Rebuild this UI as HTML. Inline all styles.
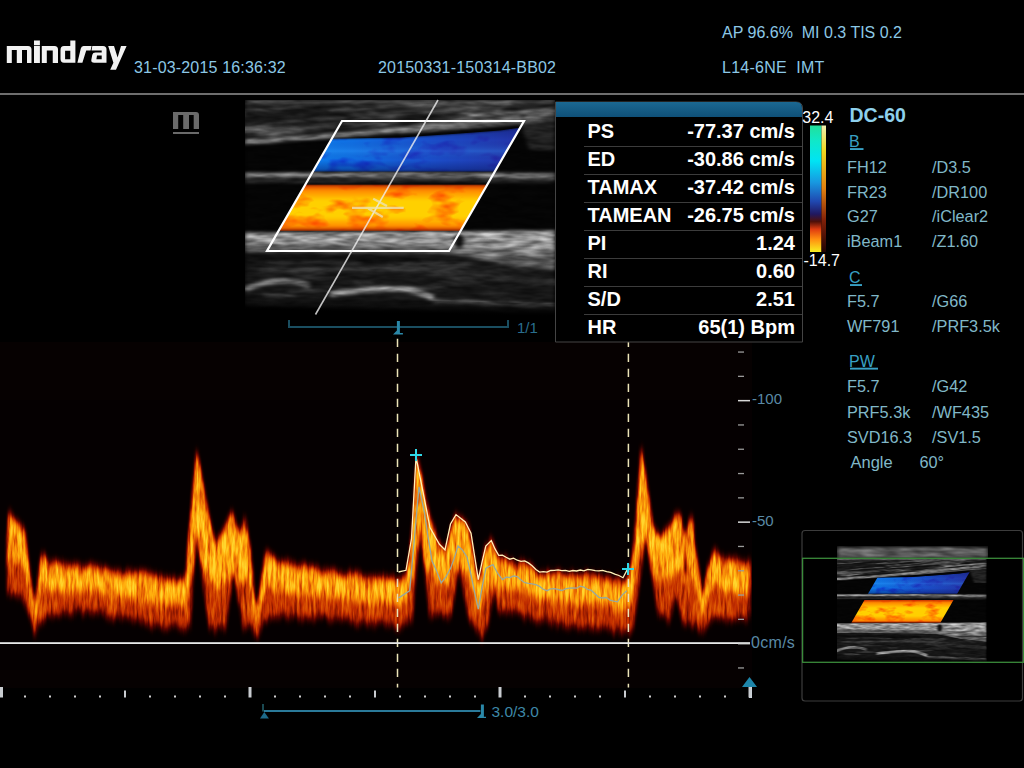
<!DOCTYPE html><html><head><meta charset="utf-8"><style>html,body{margin:0;padding:0;background:#000;width:1024px;height:768px;overflow:hidden}svg{display:block}text{font-family:"Liberation Sans",sans-serif}</style></head><body>
<svg width="1024" height="768" viewBox="0 0 1024 768">
<defs>
<filter id="hot" x="0" y="0" width="1" height="1" color-interpolation-filters="sRGB">
 <feGaussianBlur in="SourceGraphic" stdDeviation="1.8 4.5" result="b"/>
 <feTurbulence type="fractalNoise" baseFrequency="0.38 0.045" numOctaves="3" seed="5" result="n"/>
 <feColorMatrix in="n" type="matrix" values="1.5 0 0 0 -0.2  1.5 0 0 0 -0.2  1.5 0 0 0 -0.2  0 0 0 0 1" result="ng"/>
 <feComposite in="b" in2="ng" operator="arithmetic" k1="0.6" k2="0.45" k3="0" k4="0" result="m"/>
 <feComponentTransfer in="m">
  <feFuncR type="table" tableValues="0.02 0.38 0.76 0.93 1 1"/>
  <feFuncG type="table" tableValues="0 0.02 0.18 0.44 0.68 0.84"/>
  <feFuncB type="table" tableValues="0.004 0 0 0.02 0.05 0.18"/>
  <feFuncA type="linear" slope="0" intercept="1"/>
 </feComponentTransfer>
</filter>
<filter id="speck" x="0" y="0" width="1" height="1" color-interpolation-filters="sRGB">
 <feGaussianBlur in="SourceGraphic" stdDeviation="2 1.5" result="b"/>
 <feTurbulence type="fractalNoise" baseFrequency="0.05 0.22" numOctaves="2" seed="7" result="n"/>
 <feColorMatrix in="n" type="matrix" values="1.5 0 0 0 -0.25  1.5 0 0 0 -0.25  1.5 0 0 0 -0.25  0 0 0 0 1" result="ng"/>
 <feComposite in="b" in2="ng" operator="arithmetic" k1="0.7" k2="0.5" k3="0" k4="0"/>
</filter>
<filter id="flowtex" color-interpolation-filters="sRGB">
 <feGaussianBlur in="SourceGraphic" stdDeviation="1" result="b"/>
 <feTurbulence type="fractalNoise" baseFrequency="0.035 0.07" numOctaves="3" seed="11" result="n"/>
 <feColorMatrix in="n" type="matrix" values="0.2 0 0 0 0.95  1.6 0 0 0 0.2  0.3 0 0 0 0.85  0 0 0 0 1" result="ng"/>
 <feComposite in="b" in2="ng" operator="arithmetic" k1="1" k2="0" k3="0" k4="0" result="c"/>
 <feComposite in="c" in2="SourceGraphic" operator="in"/>
</filter>
<linearGradient id="blueV" x1="0" y1="0" x2="0" y2="1"><stop offset="0" stop-color="#081860" stop-opacity="0.45"/><stop offset="0.32" stop-color="#081860" stop-opacity="0"/><stop offset="0.55" stop-color="#40b0ff" stop-opacity="0.22"/><stop offset="0.75" stop-color="#081860" stop-opacity="0"/><stop offset="1" stop-color="#081860" stop-opacity="0.5"/></linearGradient><clipPath id="bmclip"><rect x="245" y="100" width="310" height="220"/></clipPath><clipPath id="para"><polygon points="342,121 524,121 449,251 267,251"/></clipPath>
<linearGradient id="fadeB" x1="0" y1="0" x2="0" y2="1"><stop offset="0" stop-color="#000" stop-opacity="0"/><stop offset="0.9" stop-color="#000" stop-opacity="1"/></linearGradient>
<linearGradient id="blueG" gradientUnits="userSpaceOnUse" x1="280" y1="0" x2="520" y2="0"><stop offset="0" stop-color="#0c86f4"/><stop offset="0.3" stop-color="#1070e4"/><stop offset="0.6" stop-color="#1a50cc"/><stop offset="1" stop-color="#2434a8"/></linearGradient>
<linearGradient id="orangeG" x1="0" y1="0" x2="0" y2="1"><stop offset="0" stop-color="#c83000"/><stop offset="0.12" stop-color="#ff8800"/><stop offset="0.35" stop-color="#ffd000"/><stop offset="0.7" stop-color="#ffd000"/><stop offset="0.9" stop-color="#ff8c00"/><stop offset="1" stop-color="#b02000"/></linearGradient>
</defs>
<g fill="#f2f2f2" fill-rule="evenodd"><path d="M6.8,62.9 V46 H28 Q31.5,46 31.5,49.5 V62.9 H27 V50 H22 V62.9 H16.8 V50 H11.8 V62.9 Z"/><path d="M34,46 H39.9 V62.9 H34 Z M34,40.4 H39.9 V45.2 H34 Z"/><path d="M41.8,62.9 V46 H54.5 Q58,46 58,49.5 V62.9 H52.75 V50.4 H46.8 V62.9 Z"/><path d="M75.4,40.4 V62.7 H64 Q60.5,62.7 60.5,59 V50 Q60.5,46 64,46 H70.3 V40.4 Z M65.1,50.7 H70.3 V59.2 H65.1 Z"/><path d="M77.4,62.7 H82.4 L86.2,50.5 H90.6 L91.6,46 H83.5 Q81.3,46 80.8,48.5 Z"/><path d="M92.3,46 H103 Q106.5,46 106.5,49.5 V62.7 H94.2 Q91,62.7 91.3,60 L92.3,54.8 Q92.8,52.4 95.5,52.4 H101.7 V50.6 H91.5 Z M97,55.5 H101.7 V59.3 H96.4 Z"/><path d="M108.2,46 H114 L117.6,57.5 L121,46 H126.6 L116,69.8 H110.2 L113.4,62.7 Z"/></g>
<text x="134" y="72.5" font-size="16" fill="#8cc8e6" font-weight="normal" text-anchor="start" letter-spacing="0.17">31-03-2015 16:36:32</text>
<text x="378" y="72.5" font-size="16" fill="#8cc8e6" font-weight="normal" text-anchor="start" letter-spacing="0.19">20150331-150314-BB02</text>
<text x="722" y="38" font-size="16" fill="#8cc8e6" font-weight="normal" text-anchor="start" >AP 96.6%&#160;&#160;MI 0.3 TIS 0.2</text>
<text x="722" y="72.5" font-size="16" fill="#8cc8e6" font-weight="normal" text-anchor="start" letter-spacing="0.25">L14-6NE&#160;&#160;IMT</text>
<rect x="0" y="93" width="1024" height="2" fill="#6e6e6e"/>
<path d="M173,129 V112 H196 Q199,112 199,115 V129 H193.7 V115 H189 V129 H183.2 V115 H178.2 V129 Z" fill="#6a6a6a"/>
<rect x="173" y="132" width="26" height="2" fill="#6a6a6a"/>
<rect x="0" y="342" width="752" height="346" fill="#060101"/>
<g id="bm"><g clip-path="url(#bmclip)"><g filter="url(#speck)">
<rect x="245" y="100" width="310" height="220" fill="#000"/>
<polygon points="245,100 555,100 555,122 245,146" fill="#2a2a2a"/>
<rect x="245" y="100" width="310" height="3" fill="#606060"/>
<ellipse cx="443" cy="105" rx="20" ry="1.4" fill="#515151" transform="rotate(-4 443 105)"/>
<ellipse cx="277" cy="129" rx="15" ry="1.8" fill="#626262" transform="rotate(-4 277 129)"/>
<ellipse cx="254" cy="112" rx="32" ry="2.0" fill="#606060" transform="rotate(-4 254 112)"/>
<ellipse cx="467" cy="118" rx="19" ry="2.0" fill="#5a5a5a" transform="rotate(-4 467 118)"/>
<ellipse cx="496" cy="104" rx="17" ry="1.8" fill="#737373" transform="rotate(-4 496 104)"/>
<ellipse cx="331" cy="110" rx="23" ry="1.3" fill="#707070" transform="rotate(-4 331 110)"/>
<ellipse cx="275" cy="133" rx="21" ry="1.3" fill="#666666" transform="rotate(-4 275 133)"/>
<ellipse cx="387" cy="107" rx="15" ry="1.6" fill="#585858" transform="rotate(-4 387 107)"/>
<ellipse cx="440" cy="123" rx="31" ry="2.2" fill="#575757" transform="rotate(-4 440 123)"/>
<ellipse cx="259" cy="112" rx="45" ry="2.4" fill="#525252" transform="rotate(-4 259 112)"/>
<ellipse cx="514" cy="110" rx="33" ry="1.7" fill="#5d5d5d" transform="rotate(-4 514 110)"/>
<ellipse cx="360" cy="110" rx="35" ry="2.2" fill="#515151" transform="rotate(-4 360 110)"/>
<ellipse cx="267" cy="126" rx="36" ry="1.4" fill="#626262" transform="rotate(-4 267 126)"/>
<ellipse cx="363" cy="131" rx="35" ry="1.5" fill="#686868" transform="rotate(-4 363 131)"/>
<ellipse cx="346" cy="126" rx="20" ry="1.2" fill="#434343" transform="rotate(-4 346 126)"/>
<ellipse cx="343" cy="112" rx="42" ry="2.0" fill="#4d4d4d" transform="rotate(-4 343 112)"/>
<ellipse cx="468" cy="108" rx="25" ry="2.5" fill="#5f5f5f" transform="rotate(-4 468 108)"/>
<ellipse cx="387" cy="111" rx="37" ry="2.0" fill="#4f4f4f" transform="rotate(-4 387 111)"/>
<ellipse cx="477" cy="112" rx="25" ry="1.5" fill="#656565" transform="rotate(-4 477 112)"/>
<ellipse cx="554" cy="111" rx="37" ry="2.4" fill="#454545" transform="rotate(-4 554 111)"/>
<ellipse cx="292" cy="109" rx="26" ry="1.3" fill="#6b6b6b" transform="rotate(-4 292 109)"/>
<ellipse cx="363" cy="131" rx="20" ry="2.0" fill="#616161" transform="rotate(-4 363 131)"/>
<ellipse cx="537" cy="114" rx="34" ry="2.0" fill="#474747" transform="rotate(-4 537 114)"/>
<ellipse cx="328" cy="123" rx="22" ry="1.4" fill="#474747" transform="rotate(-4 328 123)"/>
<ellipse cx="246" cy="130" rx="21" ry="1.9" fill="#6e6e6e" transform="rotate(-4 246 130)"/>
<ellipse cx="300" cy="133" rx="33" ry="2.4" fill="#777777" transform="rotate(-4 300 133)"/>
<ellipse cx="402" cy="109" rx="37" ry="2.0" fill="#575757" transform="rotate(-4 402 109)"/>
<ellipse cx="486" cy="113" rx="32" ry="1.9" fill="#404040" transform="rotate(-4 486 113)"/>
<ellipse cx="280" cy="116" rx="39" ry="1.5" fill="#757575" transform="rotate(-4 280 116)"/>
<ellipse cx="320" cy="121" rx="15" ry="1.9" fill="#454545" transform="rotate(-4 320 121)"/>
<ellipse cx="266" cy="130" rx="16" ry="2.1" fill="#717171" transform="rotate(-4 266 130)"/>
<ellipse cx="539" cy="106" rx="41" ry="1.8" fill="#616161" transform="rotate(-4 539 106)"/>
<ellipse cx="311" cy="121" rx="35" ry="2.2" fill="#6e6e6e" transform="rotate(-4 311 121)"/>
<ellipse cx="369" cy="122" rx="26" ry="1.9" fill="#575757" transform="rotate(-4 369 122)"/>
<ellipse cx="283" cy="111" rx="13" ry="2.0" fill="#555555" transform="rotate(-4 283 111)"/>
<ellipse cx="427" cy="104" rx="33" ry="1.5" fill="#6d6d6d" transform="rotate(-4 427 104)"/>
<ellipse cx="526" cy="117" rx="29" ry="1.6" fill="#444444" transform="rotate(-4 526 117)"/>
<ellipse cx="395" cy="117" rx="43" ry="2.0" fill="#6e6e6e" transform="rotate(-4 395 117)"/>
<ellipse cx="392" cy="124" rx="25" ry="1.3" fill="#737373" transform="rotate(-4 392 124)"/>
<ellipse cx="449" cy="111" rx="27" ry="2.2" fill="#5a5a5a" transform="rotate(-4 449 111)"/>
<ellipse cx="454" cy="124" rx="14" ry="2.2" fill="#464646" transform="rotate(-4 454 124)"/>
<ellipse cx="493" cy="106" rx="18" ry="1.8" fill="#4c4c4c" transform="rotate(-4 493 106)"/>
<ellipse cx="376" cy="111" rx="41" ry="1.3" fill="#4f4f4f" transform="rotate(-4 376 111)"/>
<ellipse cx="495" cy="119" rx="14" ry="2.6" fill="#464646" transform="rotate(-4 495 119)"/>
<ellipse cx="504" cy="120" rx="40" ry="1.4" fill="#707070" transform="rotate(-4 504 120)"/>
<ellipse cx="396" cy="109" rx="25" ry="2" fill="#181818" transform="rotate(-4 396 109)"/>
<ellipse cx="263" cy="117" rx="40" ry="2" fill="#181818" transform="rotate(-4 263 117)"/>
<ellipse cx="327" cy="128" rx="26" ry="2" fill="#181818" transform="rotate(-4 327 128)"/>
<ellipse cx="376" cy="130" rx="40" ry="2" fill="#181818" transform="rotate(-4 376 130)"/>
<ellipse cx="417" cy="121" rx="19" ry="2" fill="#181818" transform="rotate(-4 417 121)"/>
<ellipse cx="337" cy="133" rx="29" ry="2" fill="#181818" transform="rotate(-4 337 133)"/>
<ellipse cx="413" cy="122" rx="16" ry="2" fill="#181818" transform="rotate(-4 413 122)"/>
<ellipse cx="426" cy="116" rx="36" ry="2" fill="#181818" transform="rotate(-4 426 116)"/>
<ellipse cx="294" cy="135" rx="17" ry="2" fill="#181818" transform="rotate(-4 294 135)"/>
<ellipse cx="303" cy="123" rx="32" ry="2" fill="#181818" transform="rotate(-4 303 123)"/>
<ellipse cx="318" cy="108" rx="37" ry="2" fill="#181818" transform="rotate(-4 318 108)"/>
<ellipse cx="321" cy="122" rx="30" ry="2" fill="#181818" transform="rotate(-4 321 122)"/>
<ellipse cx="375" cy="120" rx="28" ry="2" fill="#181818" transform="rotate(-4 375 120)"/>
<ellipse cx="535" cy="107" rx="33" ry="2" fill="#181818" transform="rotate(-4 535 107)"/>
<ellipse cx="319" cy="116" rx="32" ry="2" fill="#181818" transform="rotate(-4 319 116)"/>
<ellipse cx="338" cy="113" rx="34" ry="2" fill="#181818" transform="rotate(-4 338 113)"/>
<ellipse cx="267" cy="120" rx="40" ry="2" fill="#181818" transform="rotate(-4 267 120)"/>
<ellipse cx="554" cy="105" rx="20" ry="2" fill="#181818" transform="rotate(-4 554 105)"/>
<ellipse cx="327" cy="132" rx="37" ry="2" fill="#181818" transform="rotate(-4 327 132)"/>
<ellipse cx="518" cy="110" rx="19" ry="2" fill="#181818" transform="rotate(-4 518 110)"/>
<ellipse cx="503" cy="117" rx="30" ry="2" fill="#181818" transform="rotate(-4 503 117)"/>
<ellipse cx="551" cy="114" rx="15" ry="2" fill="#181818" transform="rotate(-4 551 114)"/>
<path d="M245,114 L330,112" stroke="#1c1c1c" stroke-width="5" fill="none"/>
<path d="M468,116 L552,110" stroke="#8a8a8a" stroke-width="3" fill="none"/>
<path d="M400,132.5 L506,124 L555,121" stroke="#6a6a6a" stroke-width="3" fill="none"/>
<path d="M245,142 L334,135.6 L427.5,127 L521,118" stroke="#8c8c8c" stroke-width="4.5" fill="none"/>
<path d="M260,130 L336,126" stroke="#505050" stroke-width="3" fill="none"/>
<polygon points="245,147 336,141 427,133 521,124 555,124 555,172 245,172" fill="#050505"/>
<polygon points="520,124 555,121 555,150 530,150" fill="#262626"/>
<path d="M525,118 L555,114" stroke="#8a8a8a" stroke-width="4" fill="none"/>
<rect x="245" y="172" width="310" height="11" fill="#3a3a3a"/>
<path d="M245,175 L400,174.5 L555,176" stroke="#a0a0a0" stroke-width="3.5" fill="none"/>
<path d="M245,180 L555,182" stroke="#202020" stroke-width="2.5" fill="none"/>
<rect x="245" y="184" width="310" height="47" fill="#050505"/>
<polygon points="245,232 555,230 555,270 500,264 450,254 245,252" fill="#666"/>
<polygon points="245,233 450,232 555,231 555,250 450,246 245,244" fill="#b0b0b0"/>
<polygon points="450,248 555,250 555,262 470,256" fill="#888"/>
<ellipse cx="459" cy="241" rx="5" ry="7" fill="#101010"/>
<polygon points="245,252 450,254 500,264 555,270 555,314 245,306" fill="#1a1a1a"/>
<ellipse cx="498" cy="270" rx="38" ry="1.4" fill="#2a2a2a"/>
<ellipse cx="281" cy="262" rx="15" ry="1.5" fill="#474747"/>
<ellipse cx="310" cy="272" rx="25" ry="1.5" fill="#343434"/>
<ellipse cx="527" cy="259" rx="35" ry="1.3" fill="#3f3f3f"/>
<ellipse cx="348" cy="263" rx="15" ry="1.7" fill="#343434"/>
<ellipse cx="464" cy="281" rx="12" ry="2.3" fill="#2b2b2b"/>
<ellipse cx="525" cy="280" rx="27" ry="1.4" fill="#3b3b3b"/>
<ellipse cx="285" cy="270" rx="37" ry="1.5" fill="#262626"/>
<ellipse cx="322" cy="261" rx="37" ry="1.7" fill="#474747"/>
<ellipse cx="437" cy="264" rx="36" ry="2.4" fill="#333333"/>
<ellipse cx="496" cy="295" rx="15" ry="2.3" fill="#252525"/>
<ellipse cx="488" cy="275" rx="18" ry="2.1" fill="#333333"/>
<ellipse cx="279" cy="295" rx="17" ry="2.2" fill="#424242"/>
<ellipse cx="388" cy="270" rx="17" ry="2.0" fill="#323232"/>
<ellipse cx="369" cy="269" rx="39" ry="1.5" fill="#282828"/>
<ellipse cx="444" cy="274" rx="20" ry="1.2" fill="#464646"/>
<ellipse cx="517" cy="268" rx="11" ry="1.9" fill="#343434"/>
<ellipse cx="352" cy="291" rx="28" ry="1.8" fill="#3f3f3f"/>
<ellipse cx="364" cy="282" rx="11" ry="1.7" fill="#343434"/>
<ellipse cx="406" cy="292" rx="21" ry="1.3" fill="#303030"/>
<ellipse cx="451" cy="271" rx="30" ry="1.3" fill="#383838"/>
<ellipse cx="524" cy="279" rx="20" ry="2.0" fill="#3e3e3e"/>
<ellipse cx="417" cy="265" rx="30" ry="2.3" fill="#3c3c3c"/>
<ellipse cx="436" cy="270" rx="35" ry="1.6" fill="#474747"/>
<ellipse cx="310" cy="291" rx="24" ry="1.7" fill="#383838"/>
<ellipse cx="311" cy="277" rx="30" ry="1.5" fill="#2e2e2e"/>
<ellipse cx="451" cy="284" rx="35" ry="2.1" fill="#292929"/>
<ellipse cx="454" cy="267" rx="14" ry="1.3" fill="#303030"/>
<ellipse cx="550" cy="283" rx="24" ry="2.3" fill="#282828"/>
<ellipse cx="423" cy="288" rx="25" ry="1.5" fill="#3c3c3c"/>
<path d="M245,258 L420,260" stroke="#101010" stroke-width="5" fill="none"/>
<path d="M260,270 L420,268" stroke="#404040" stroke-width="4" fill="none"/>
<path d="M245,290 Q262,281 285,281 Q300,282 310,286" stroke="#8a8a8a" stroke-width="5" fill="none"/>
<path d="M330,294 Q370,288 400,289 Q420,291 433,298" stroke="#9a9a9a" stroke-width="6" fill="none"/>
<path d="M433,301 Q480,303 555,306" stroke="#5a5a5a" stroke-width="5" fill="none"/>
<path d="M440,275 L555,282" stroke="#2c2c2c" stroke-width="6" fill="none"/>
</g></g>
<polygon points="245,296 555,304 555,320 245,320" fill="url(#fadeB)"/>
<g filter="url(#flowtex)" clip-path="url(#para)">
<polygon points="245,140 400,137.5 460,133.5 500,130.5 518,128 540,126 540,171.5 245,171.5" fill="url(#blueG)"/>
<rect x="245" y="184.5" width="310" height="46.5" fill="url(#orangeG)"/>
</g>
<polygon clip-path="url(#para)" points="245,140 400,137.5 460,133.5 500,130.5 518,128 540,126 540,171.5 245,171.5" fill="url(#blueV)"/>
</g>
<polygon points="342,121 524,121 449,251 267,251" fill="none" stroke="#fff" stroke-width="2.2"/>
<line x1="438" y1="100" x2="315.5" y2="314.5" stroke="#f0f0f0" stroke-width="1.6" opacity="0.8"/>
<g stroke="#ece4c0" stroke-width="2.2" opacity="0.75" fill="none">
<line x1="352" y1="207.8" x2="403.7" y2="207.8"/>
<line x1="373.2" y1="198.7" x2="387" y2="206"/>
<line x1="368.3" y1="208.5" x2="382.8" y2="217"/>
</g>
<rect x="288" y="326" width="221" height="2" fill="#1a4e60"/>
<rect x="288" y="320" width="2" height="8" fill="#1a4e60"/>
<rect x="507" y="320" width="2" height="8" fill="#1a4e60"/>
<path d="M396.9,321 h3 v12 h3 v1.5 h-9.9 l3.9,-4 z" fill="#2a88a8"/>
<text x="517" y="333" font-size="15" fill="#2a6e8e" font-weight="normal" text-anchor="start" >1/1</text>
<g filter="url(#hot)">
<rect x="0" y="400" width="752" height="270" fill="#000"/>
<polygon points="7.0,542.8 7.5,534.5 8.0,526.3 8.5,518.0 9.0,509.8 9.5,510.3 10.0,512.7 10.5,513.3 11.0,513.9 11.5,514.5 12.0,515.0 12.5,515.6 13.0,518.7 13.5,519.3 14.0,519.8 14.5,520.4 15.0,521.0 15.5,521.4 16.0,520.0 16.5,520.4 17.0,520.8 17.5,521.3 18.0,521.7 18.5,522.1 19.0,524.1 19.5,524.5 20.0,524.9 20.5,525.3 21.0,525.8 21.5,526.8 22.0,525.2 22.5,526.2 23.0,527.2 23.5,528.2 24.0,529.2 24.5,530.2 25.0,530.7 25.5,534.9 26.0,539.1 26.5,543.2 27.0,547.4 27.5,551.6 28.0,556.7 28.5,560.8 29.0,565.0 29.5,569.2 30.0,573.3 30.5,577.5 31.0,582.5 31.5,585.5 32.0,588.5 32.5,591.5 33.0,594.5 33.5,597.5 34.0,599.1 34.5,602.1 35.0,605.1 35.5,600.3 36.0,595.6 36.5,590.8 37.0,589.0 37.5,584.3 38.0,579.5 38.5,574.8 39.0,570.0 39.5,567.9 40.0,561.9 40.5,559.7 41.0,557.5 41.5,555.4 42.0,553.2 42.5,553.6 43.0,553.5 43.5,553.9 44.0,554.4 44.5,554.8 45.0,555.2 45.5,555.7 46.0,558.9 46.5,559.3 47.0,559.7 47.5,560.2 48.0,560.6 48.5,561.1 49.0,562.8 49.5,563.3 50.0,563.7 50.5,563.7 51.0,563.8 51.5,563.8 52.0,561.4 52.5,561.5 53.0,561.5 53.5,561.6 54.0,561.6 54.5,561.7 55.0,561.0 55.5,561.1 56.0,561.1 56.5,561.2 57.0,561.2 57.5,561.3 58.0,562.9 58.5,563.0 59.0,563.0 59.5,563.1 60.0,563.1 60.5,563.2 61.0,562.2 61.5,562.2 62.0,562.3 62.5,562.3 63.0,562.4 63.5,562.4 64.0,564.7 64.5,564.8 65.0,564.8 65.5,564.9 66.0,564.9 66.5,565.0 67.0,564.6 67.5,564.7 68.0,564.7 68.5,564.8 69.0,564.8 69.5,564.9 70.0,564.8 70.5,564.9 71.0,564.9 71.5,565.0 72.0,565.0 72.5,565.1 73.0,564.2 73.5,564.3 74.0,564.3 74.5,564.4 75.0,564.4 75.5,564.5 76.0,564.0 76.5,564.0 77.0,564.1 77.5,564.1 78.0,564.2 78.5,564.2 79.0,566.2 79.5,566.2 80.0,566.3 80.5,566.3 81.0,566.4 81.5,566.4 82.0,566.8 82.5,566.9 83.0,566.9 83.5,567.0 84.0,567.0 84.5,567.1 85.0,566.3 85.5,566.3 86.0,566.4 86.5,566.4 87.0,566.5 87.5,566.5 88.0,565.0 88.5,565.0 89.0,565.1 89.5,565.1 90.0,565.2 90.5,565.3 91.0,564.0 91.5,564.1 92.0,564.2 92.5,564.3 93.0,564.4 93.5,564.4 94.0,567.0 94.5,567.1 95.0,567.2 95.5,567.3 96.0,567.4 96.5,567.4 97.0,565.6 97.5,565.7 98.0,565.8 98.5,565.9 99.0,565.9 99.5,566.0 100.0,568.3 100.5,568.4 101.0,568.5 101.5,568.6 102.0,568.6 102.5,568.7 103.0,567.4 103.5,567.5 104.0,567.6 104.5,567.7 105.0,567.8 105.5,567.8 106.0,568.8 106.5,568.9 107.0,569.0 107.5,569.1 108.0,569.2 108.5,569.2 109.0,571.2 109.5,571.3 110.0,571.4 110.5,571.5 111.0,571.5 111.5,571.6 112.0,572.1 112.5,572.2 113.0,572.3 113.5,572.4 114.0,572.5 114.5,572.5 115.0,570.8 115.5,570.9 116.0,571.0 116.5,571.1 117.0,571.1 117.5,571.2 118.0,570.6 118.5,570.7 119.0,570.8 119.5,570.8 120.0,570.9 120.5,571.0 121.0,573.6 121.5,573.7 122.0,573.7 122.5,573.8 123.0,573.9 123.5,573.9 124.0,572.8 124.5,572.9 125.0,572.9 125.5,573.0 126.0,573.1 126.5,573.1 127.0,570.1 127.5,570.2 128.0,570.2 128.5,570.3 129.0,570.4 129.5,570.4 130.0,571.1 130.5,571.2 131.0,571.2 131.5,571.3 132.0,571.4 132.5,571.4 133.0,571.6 133.5,571.7 134.0,571.7 134.5,571.8 135.0,571.9 135.5,571.9 136.0,572.7 136.5,572.8 137.0,572.9 137.5,572.9 138.0,573.0 138.5,573.1 139.0,571.3 139.5,571.4 140.0,571.5 140.5,571.5 141.0,571.6 141.5,571.7 142.0,571.9 142.5,571.9 143.0,572.0 143.5,572.1 144.0,572.1 144.5,572.2 145.0,571.9 145.5,571.9 146.0,572.0 146.5,572.1 147.0,572.1 147.5,572.2 148.0,572.6 148.5,572.7 149.0,572.7 149.5,572.8 150.0,572.9 150.5,572.9 151.0,574.7 151.5,574.8 152.0,574.8 152.5,574.9 153.0,575.0 153.5,575.1 154.0,574.5 154.5,574.5 155.0,574.6 155.5,574.7 156.0,574.8 156.5,574.9 157.0,577.4 157.5,577.5 158.0,577.5 158.5,577.6 159.0,577.7 159.5,577.8 160.0,575.8 160.5,575.9 161.0,576.0 161.5,576.1 162.0,576.2 162.5,576.2 163.0,579.4 163.5,579.5 164.0,579.6 164.5,579.7 165.0,579.7 165.5,579.8 166.0,577.2 166.5,577.2 167.0,577.3 167.5,577.4 168.0,577.5 168.5,577.6 169.0,578.9 169.5,579.0 170.0,579.1 170.5,579.2 171.0,579.3 171.5,579.3 172.0,577.2 172.5,577.3 173.0,577.4 173.5,577.4 174.0,577.5 174.5,577.6 175.0,580.9 175.5,581.0 176.0,581.0 176.5,581.1 177.0,581.1 177.5,581.2 178.0,579.4 178.5,579.5 179.0,579.5 179.5,579.6 180.0,579.6 180.5,579.7 181.0,577.9 181.5,578.0 182.0,578.0 182.5,578.1 183.0,578.1 183.5,578.2 184.0,582.1 184.5,578.7 185.0,575.4 185.5,572.1 186.0,568.7 186.5,565.4 187.0,559.4 187.5,552.8 188.0,546.1 188.5,539.4 189.0,532.8 189.5,526.1 190.0,522.4 190.5,517.0 191.0,511.6 191.5,506.2 192.0,500.8 192.5,495.5 193.0,488.3 193.5,483.0 194.0,477.6 194.5,472.2 195.0,466.8 195.5,461.4 196.0,454.8 196.5,449.4 197.0,452.0 197.5,454.6 198.0,457.1 198.5,459.7 199.0,461.0 199.5,463.6 200.0,466.2 200.5,468.8 201.0,471.5 201.5,474.1 202.0,477.8 202.5,480.5 203.0,483.1 203.5,485.7 204.0,488.4 204.5,491.0 205.0,495.6 205.5,498.3 206.0,500.9 206.5,503.6 207.0,506.2 207.5,508.5 208.0,510.3 208.5,512.6 209.0,514.8 209.5,517.1 210.0,519.3 210.5,521.6 211.0,524.5 211.5,526.7 212.0,529.0 212.5,531.2 213.0,533.5 213.5,535.7 214.0,536.6 214.5,538.9 215.0,541.1 215.5,540.5 216.0,540.0 216.5,539.4 217.0,538.8 217.5,538.2 218.0,537.6 218.5,537.1 219.0,536.5 219.5,535.9 220.0,535.3 220.5,534.7 221.0,534.1 221.5,533.6 222.0,533.0 222.5,531.9 223.0,530.1 223.5,529.0 224.0,527.9 224.5,526.8 225.0,525.7 225.5,524.6 226.0,523.4 226.5,522.3 227.0,521.2 227.5,520.1 228.0,519.0 228.5,517.9 229.0,517.6 229.5,516.5 230.0,515.4 230.5,514.3 231.0,513.2 231.5,512.1 232.0,510.1 232.5,511.7 233.0,513.3 233.5,514.8 234.0,516.4 234.5,518.0 235.0,522.6 235.5,524.2 236.0,525.8 236.5,527.3 237.0,528.9 237.5,530.5 238.0,528.3 238.5,529.9 239.0,531.5 239.5,530.2 240.0,529.0 240.5,527.7 241.0,530.5 241.5,529.2 242.0,528.0 242.5,526.7 243.0,525.5 243.5,524.2 244.0,519.0 244.5,517.7 245.0,516.5 245.5,519.5 246.0,522.5 246.5,525.5 247.0,527.9 247.5,530.9 248.0,533.9 248.5,536.9 249.0,539.9 249.5,542.9 250.0,547.2 250.5,552.2 251.0,557.2 251.5,562.2 252.0,567.2 252.5,572.2 253.0,580.1 253.5,585.1 254.0,590.1 254.5,595.1 255.0,600.1 255.5,601.1 256.0,600.2 256.5,601.2 257.0,602.2 257.5,603.2 258.0,604.2 258.5,600.2 259.0,595.9 259.5,591.9 260.0,587.9 260.5,583.9 261.0,579.9 261.5,576.6 262.0,574.8 262.5,571.5 263.0,568.2 263.5,564.9 264.0,561.6 264.5,558.3 265.0,555.3 265.5,552.0 266.0,551.0 266.5,551.6 267.0,552.2 267.5,552.8 268.0,551.7 268.5,552.2 269.0,552.8 269.5,553.4 270.0,554.0 270.5,554.6 271.0,553.9 271.5,554.5 272.0,555.1 272.5,555.7 273.0,556.3 273.5,556.8 274.0,556.9 274.5,557.5 275.0,558.1 275.5,558.2 276.0,558.3 276.5,558.5 277.0,562.4 277.5,562.5 278.0,562.6 278.5,562.7 279.0,562.8 279.5,563.0 280.0,561.6 280.5,561.7 281.0,561.8 281.5,561.9 282.0,562.0 282.5,562.2 283.0,562.7 283.5,562.8 284.0,562.9 284.5,563.0 285.0,563.1 285.5,563.2 286.0,560.1 286.5,560.2 287.0,560.3 287.5,560.4 288.0,560.5 288.5,560.7 289.0,562.3 289.5,562.4 290.0,562.5 290.5,562.6 291.0,562.7 291.5,562.8 292.0,563.2 292.5,563.4 293.0,563.5 293.5,563.6 294.0,563.7 294.5,563.8 295.0,565.6 295.5,565.7 296.0,565.9 296.5,566.0 297.0,566.1 297.5,566.2 298.0,566.2 298.5,566.3 299.0,566.4 299.5,566.5 300.0,566.6 300.5,566.7 301.0,564.0 301.5,564.1 302.0,564.2 302.5,564.3 303.0,564.4 303.5,564.5 304.0,564.0 304.5,564.1 305.0,564.2 305.5,564.3 306.0,564.5 306.5,564.6 307.0,566.9 307.5,567.0 308.0,567.1 308.5,567.2 309.0,567.3 309.5,567.4 310.0,565.9 310.5,566.0 311.0,566.1 311.5,566.2 312.0,566.3 312.5,566.4 313.0,567.5 313.5,567.6 314.0,567.7 314.5,567.8 315.0,567.9 315.5,568.0 316.0,566.9 316.5,567.0 317.0,567.1 317.5,567.2 318.0,567.3 318.5,567.3 319.0,570.9 319.5,570.9 320.0,571.0 320.5,571.1 321.0,571.2 321.5,571.2 322.0,571.9 322.5,572.0 323.0,572.1 323.5,572.1 324.0,572.2 324.5,572.3 325.0,569.6 325.5,569.6 326.0,569.7 326.5,569.8 327.0,569.8 327.5,569.9 328.0,570.9 328.5,571.0 329.0,571.0 329.5,571.1 330.0,571.2 330.5,571.3 331.0,570.1 331.5,570.1 332.0,570.2 332.5,570.3 333.0,570.4 333.5,570.4 334.0,570.2 334.5,570.3 335.0,570.3 335.5,570.4 336.0,570.5 336.5,570.6 337.0,572.1 337.5,572.2 338.0,572.3 338.5,572.4 339.0,572.4 339.5,572.5 340.0,573.2 340.5,573.2 341.0,573.3 341.5,573.4 342.0,573.4 342.5,573.5 343.0,574.7 343.5,574.7 344.0,574.8 344.5,574.9 345.0,574.9 345.5,575.0 346.0,575.3 346.5,575.4 347.0,575.5 347.5,575.5 348.0,575.6 348.5,575.7 349.0,571.1 349.5,571.1 350.0,571.2 350.5,571.3 351.0,571.3 351.5,571.4 352.0,575.1 352.5,575.1 353.0,575.2 353.5,575.3 354.0,575.3 354.5,575.4 355.0,572.0 355.5,572.1 356.0,572.2 356.5,572.2 357.0,572.3 357.5,572.4 358.0,572.9 358.5,573.0 359.0,573.1 359.5,573.1 360.0,573.2 360.5,573.3 361.0,577.1 361.5,577.1 362.0,577.2 362.5,577.2 363.0,577.3 363.5,577.3 364.0,577.2 364.5,577.3 365.0,577.3 365.5,577.4 366.0,577.4 366.5,577.5 367.0,577.7 367.5,577.8 368.0,577.8 368.5,577.9 369.0,577.9 369.5,578.0 370.0,577.4 370.5,577.4 371.0,577.5 371.5,577.6 372.0,577.6 372.5,577.7 373.0,576.7 373.5,576.8 374.0,576.8 374.5,576.9 375.0,576.9 375.5,577.0 376.0,575.7 376.5,575.8 377.0,575.8 377.5,575.9 378.0,575.9 378.5,576.0 379.0,577.9 379.5,577.9 380.0,578.0 380.5,578.0 381.0,578.1 381.5,578.1 382.0,576.0 382.5,576.1 383.0,576.1 383.5,576.2 384.0,576.2 384.5,576.3 385.0,577.1 385.5,577.2 386.0,577.2 386.5,577.3 387.0,577.3 387.5,577.4 388.0,578.4 388.5,578.5 389.0,578.5 389.5,578.6 390.0,578.6 390.5,578.7 391.0,576.5 391.5,576.6 392.0,576.6 392.5,576.7 393.0,576.7 393.5,576.8 394.0,578.6 394.5,578.7 395.0,578.7 395.5,578.8 396.0,578.8 396.5,578.9 397.0,580.9 397.5,581.0 398.0,581.0 398.5,581.1 399.0,581.1 399.5,580.9 400.0,577.6 400.5,577.4 401.0,577.2 401.5,576.9 402.0,576.7 402.5,576.5 403.0,577.1 403.5,576.9 404.0,576.7 404.5,576.5 405.0,576.3 405.5,576.1 406.0,574.0 406.5,571.3 407.0,568.6 407.5,566.0 408.0,563.3 408.5,560.6 409.0,560.2 409.5,555.2 410.0,550.2 410.5,545.2 411.0,540.2 411.5,535.2 412.0,528.5 412.5,523.5 413.0,518.5 413.5,510.4 414.0,502.2 414.5,494.1 415.0,485.3 415.5,477.2 416.0,469.1 416.5,461.0 417.0,452.8 417.5,455.3 418.0,459.4 418.5,461.8 419.0,464.2 419.5,466.6 420.0,469.0 420.5,471.4 421.0,472.4 421.5,474.8 422.0,477.2 422.5,479.6 423.0,482.1 423.5,484.7 424.0,490.6 424.5,493.3 425.0,496.0 425.5,498.6 426.0,501.3 426.5,503.5 427.0,503.7 427.5,505.9 428.0,508.1 428.5,510.3 429.0,512.5 429.5,514.7 430.0,516.1 430.5,518.3 431.0,520.5 431.5,521.6 432.0,522.8 432.5,523.9 433.0,525.3 433.5,526.4 434.0,527.6 434.5,528.7 435.0,529.8 435.5,531.0 436.0,535.5 436.5,536.6 437.0,537.8 437.5,538.9 438.0,540.1 438.5,540.9 439.0,541.9 439.5,542.8 440.0,543.6 440.5,544.5 441.0,545.4 441.5,546.3 442.0,545.8 442.5,546.7 443.0,547.5 443.5,548.4 444.0,549.3 444.5,550.2 445.0,548.0 445.5,548.8 446.0,549.7 446.5,547.0 447.0,544.2 447.5,541.5 448.0,542.2 448.5,539.4 449.0,536.7 449.5,533.9 450.0,531.2 450.5,529.9 451.0,527.2 451.5,525.9 452.0,524.7 452.5,523.4 453.0,522.2 453.5,520.9 454.0,518.4 454.5,517.2 455.0,515.9 455.5,514.7 456.0,513.4 456.5,513.8 457.0,516.7 457.5,517.1 458.0,517.5 458.5,517.9 459.0,518.3 459.5,518.7 460.0,516.8 460.5,517.2 461.0,517.6 461.5,518.1 462.0,518.6 462.5,519.1 463.0,520.3 463.5,520.8 464.0,521.3 464.5,521.8 465.0,522.3 465.5,522.8 466.0,522.6 466.5,523.1 467.0,523.6 467.5,524.1 468.0,524.6 468.5,525.1 469.0,527.8 469.5,530.6 470.0,533.4 470.5,536.2 471.0,539.0 471.5,541.8 472.0,544.1 472.5,546.9 473.0,549.7 473.5,552.5 474.0,555.3 474.5,557.9 475.0,562.6 475.5,565.2 476.0,567.8 476.5,570.4 477.0,573.0 477.5,575.6 478.0,573.5 478.5,576.1 479.0,578.7 479.5,575.5 480.0,572.3 480.5,569.1 481.0,569.4 481.5,566.2 482.0,563.0 482.5,559.8 483.0,556.6 483.5,553.4 484.0,547.1 484.5,546.5 485.0,545.8 485.5,545.2 486.0,544.6 486.5,543.9 487.0,547.0 487.5,546.3 488.0,545.7 488.5,545.0 489.0,544.4 489.5,543.7 490.0,538.9 490.5,538.2 491.0,537.6 491.5,538.7 492.0,539.7 492.5,540.8 493.0,543.2 493.5,544.3 494.0,545.4 494.5,546.4 495.0,547.5 495.5,548.6 496.0,552.9 496.5,554.0 497.0,555.0 497.5,556.1 498.0,557.2 498.5,557.4 499.0,557.2 499.5,557.4 500.0,557.7 500.5,558.0 501.0,558.2 501.5,558.5 502.0,557.6 502.5,557.9 503.0,558.1 503.5,558.4 504.0,558.7 504.5,558.9 505.0,556.6 505.5,556.9 506.0,557.2 506.5,557.4 507.0,557.7 507.5,558.0 508.0,562.6 508.5,562.9 509.0,563.2 509.5,563.4 510.0,563.7 510.5,564.0 511.0,560.1 511.5,560.3 512.0,560.6 512.5,560.9 513.0,561.1 513.5,561.1 514.0,564.8 514.5,564.8 515.0,564.8 515.5,564.8 516.0,564.8 516.5,564.8 517.0,564.4 517.5,564.4 518.0,564.4 518.5,564.4 519.0,564.4 519.5,564.4 520.0,560.7 520.5,560.7 521.0,560.7 521.5,560.7 522.0,560.7 522.5,560.7 523.0,562.8 523.5,562.8 524.0,562.8 524.5,562.8 525.0,562.8 525.5,562.8 526.0,563.8 526.5,563.8 527.0,563.8 527.5,564.3 528.0,564.8 528.5,565.3 529.0,563.3 529.5,563.8 530.0,564.3 530.5,564.8 531.0,565.3 531.5,565.8 532.0,566.0 532.5,566.5 533.0,567.0 533.5,567.5 534.0,568.0 534.5,568.5 535.0,570.3 535.5,570.8 536.0,571.3 536.5,571.8 537.0,572.3 537.5,572.8 538.0,575.6 538.5,575.6 539.0,575.5 539.5,575.5 540.0,575.5 540.5,575.4 541.0,572.5 541.5,572.5 542.0,572.4 542.5,572.4 543.0,572.4 543.5,572.3 544.0,574.5 544.5,574.5 545.0,574.4 545.5,574.4 546.0,574.4 546.5,574.3 547.0,571.0 547.5,571.0 548.0,570.9 548.5,570.9 549.0,570.9 549.5,570.8 550.0,572.8 550.5,572.7 551.0,572.7 551.5,572.7 552.0,572.6 552.5,572.6 553.0,574.6 553.5,574.6 554.0,574.6 554.5,574.6 555.0,574.6 555.5,574.6 556.0,570.9 556.5,570.9 557.0,570.9 557.5,571.0 558.0,571.0 558.5,571.0 559.0,572.1 559.5,572.1 560.0,572.2 560.5,572.2 561.0,572.2 561.5,572.2 562.0,574.8 562.5,574.8 563.0,574.8 563.5,574.8 564.0,574.8 564.5,574.9 565.0,573.9 565.5,573.9 566.0,574.0 566.5,574.0 567.0,574.0 567.5,574.0 568.0,575.3 568.5,575.3 569.0,575.4 569.5,575.4 570.0,575.4 570.5,575.4 571.0,572.4 571.5,572.5 572.0,572.5 572.5,572.5 573.0,572.5 573.5,572.5 574.0,576.2 574.5,576.2 575.0,576.2 575.5,576.2 576.0,576.2 576.5,576.3 577.0,574.5 577.5,574.5 578.0,574.5 578.5,574.5 579.0,574.6 579.5,574.6 580.0,575.8 580.5,575.9 581.0,575.9 581.5,576.0 582.0,576.0 582.5,576.1 583.0,573.5 583.5,573.6 584.0,573.7 584.5,573.8 585.0,573.8 585.5,573.9 586.0,572.2 586.5,572.3 587.0,572.4 587.5,572.5 588.0,572.5 588.5,572.6 589.0,576.5 589.5,576.5 590.0,576.6 590.5,576.7 591.0,576.8 591.5,576.8 592.0,573.5 592.5,573.6 593.0,573.7 593.5,573.7 594.0,573.8 594.5,573.9 595.0,576.6 595.5,576.7 596.0,576.7 596.5,576.8 597.0,576.9 597.5,577.0 598.0,574.5 598.5,574.6 599.0,574.7 599.5,574.7 600.0,574.8 600.5,574.9 601.0,578.2 601.5,578.2 602.0,578.3 602.5,578.4 603.0,578.4 603.5,578.5 604.0,578.0 604.5,578.1 605.0,578.2 605.5,578.3 606.0,578.3 606.5,578.4 607.0,576.3 607.5,576.4 608.0,576.5 608.5,576.6 609.0,576.6 609.5,576.7 610.0,579.6 610.5,579.7 611.0,579.8 611.5,579.9 612.0,579.9 612.5,580.0 613.0,580.6 613.5,580.7 614.0,580.8 614.5,580.9 615.0,580.9 615.5,581.0 616.0,577.4 616.5,577.5 617.0,577.6 617.5,577.7 618.0,577.7 618.5,577.8 619.0,580.7 619.5,580.8 620.0,580.9 620.5,580.9 621.0,581.0 621.5,581.1 622.0,582.0 622.5,581.8 623.0,581.6 623.5,581.4 624.0,581.1 624.5,580.9 625.0,580.1 625.5,579.9 626.0,579.7 626.5,579.5 627.0,579.3 627.5,579.0 628.0,575.4 628.5,575.2 629.0,575.0 629.5,572.2 630.0,569.3 630.5,566.5 631.0,566.2 631.5,563.4 632.0,560.5 632.5,555.5 633.0,550.5 633.5,545.5 634.0,542.0 634.5,537.0 635.0,532.0 635.5,527.0 636.0,522.0 636.5,515.1 637.0,504.0 637.5,497.1 638.0,490.2 638.5,483.3 639.0,476.5 639.5,469.6 640.0,463.1 640.5,456.2 641.0,449.3 641.5,446.4 642.0,449.5 642.5,452.6 643.0,458.2 643.5,461.3 644.0,464.4 644.5,467.5 645.0,470.6 645.5,474.1 646.0,477.3 646.5,480.8 647.0,484.4 647.5,487.9 648.0,491.4 648.5,494.9 649.0,498.4 649.5,501.9 650.0,505.4 650.5,509.0 651.0,512.5 651.5,516.0 652.0,518.5 652.5,522.0 653.0,524.4 653.5,525.2 654.0,525.9 654.5,526.6 655.0,528.9 655.5,529.6 656.0,530.4 656.5,531.1 657.0,531.8 657.5,532.6 658.0,533.4 658.5,534.1 659.0,534.9 659.5,535.6 660.0,536.3 660.5,537.1 661.0,535.7 661.5,535.0 662.0,534.2 662.5,533.5 663.0,532.8 663.5,532.1 664.0,530.7 664.5,530.0 665.0,529.3 665.5,528.6 666.0,527.8 666.5,527.1 667.0,529.7 667.5,528.9 668.0,528.2 668.5,527.5 669.0,526.8 669.5,526.1 670.0,525.6 670.5,524.7 671.0,523.8 671.5,523.0 672.0,522.1 672.5,521.2 673.0,518.0 673.5,517.1 674.0,516.3 674.5,515.4 675.0,514.5 675.5,513.6 676.0,515.1 676.5,514.2 677.0,513.3 677.5,512.8 678.0,513.9 678.5,515.0 679.0,512.1 679.5,513.2 680.0,514.3 680.5,515.4 681.0,516.5 681.5,518.6 682.0,525.2 682.5,527.3 683.0,529.3 683.5,531.4 684.0,533.5 684.5,535.5 685.0,533.7 685.5,535.7 686.0,534.5 686.5,532.4 687.0,530.4 687.5,528.3 688.0,526.5 688.5,524.4 689.0,522.4 689.5,520.8 690.0,519.3 690.5,517.8 691.0,516.2 691.5,514.6 692.0,516.7 692.5,519.6 693.0,522.5 693.5,525.4 694.0,531.6 694.5,536.0 695.0,540.3 695.5,544.6 696.0,549.0 696.5,553.3 697.0,553.6 697.5,557.0 698.0,560.4 698.5,563.8 699.0,567.2 699.5,570.6 700.0,575.9 700.5,579.3 701.0,582.7 701.5,586.1 702.0,589.5 702.5,587.5 703.0,586.7 703.5,584.7 704.0,582.7 704.5,580.7 705.0,578.7 705.5,576.7 706.0,572.4 706.5,570.4 707.0,568.4 707.5,566.4 708.0,564.4 708.5,563.2 709.0,563.9 709.5,562.7 710.0,561.4 710.5,560.1 711.0,558.9 711.5,557.6 712.0,555.0 712.5,553.8 713.0,552.5 713.5,551.2 714.0,550.0 714.5,549.4 715.0,548.8 715.5,549.2 716.0,549.7 716.5,550.1 717.0,550.5 717.5,550.9 718.0,555.4 718.5,555.8 719.0,556.3 719.5,556.7 720.0,557.1 720.5,557.5 721.0,555.6 721.5,556.0 722.0,556.5 722.5,556.9 723.0,557.3 723.5,557.7 724.0,560.0 724.5,560.4 725.0,560.8 725.5,560.9 726.0,561.0 726.5,561.0 727.0,557.5 727.5,557.6 728.0,557.6 728.5,557.7 729.0,557.7 729.5,557.8 730.0,559.8 730.5,559.9 731.0,560.0 731.5,560.0 732.0,560.1 732.5,560.1 733.0,557.8 733.5,557.8 734.0,557.9 734.5,558.0 735.0,558.0 735.5,558.1 736.0,558.8 736.5,558.8 737.0,558.9 737.5,558.9 738.0,559.0 738.5,559.1 739.0,562.3 739.5,562.3 740.0,562.4 740.5,562.4 741.0,562.5 741.5,562.6 742.0,561.2 742.5,561.3 743.0,561.3 743.5,561.4 744.0,561.5 744.5,561.5 745.0,563.6 745.5,563.7 746.0,563.7 746.5,563.8 747.0,563.9 747.5,563.9 748.0,559.7 748.5,559.8 749.0,559.8 749.5,559.9 750.0,559.9 750.0,614.8 749.5,614.8 749.0,614.8 748.5,614.8 748.0,614.8 747.5,620.5 747.0,620.5 746.5,620.5 746.0,620.5 745.5,620.5 745.0,620.5 744.5,617.1 744.0,617.1 743.5,617.1 743.0,617.1 742.5,617.1 742.0,617.1 741.5,617.5 741.0,617.5 740.5,617.5 740.0,617.5 739.5,617.5 739.0,617.5 738.5,618.5 738.0,618.5 737.5,618.5 737.0,618.5 736.5,618.5 736.0,618.5 735.5,618.5 735.0,618.5 734.5,618.5 734.0,618.5 733.5,618.5 733.0,618.5 732.5,620.8 732.0,620.8 731.5,620.8 731.0,620.8 730.5,620.8 730.0,620.8 729.5,619.2 729.0,619.2 728.5,619.2 728.0,619.2 727.5,619.2 727.0,619.2 726.5,620.1 726.0,620.1 725.5,620.1 725.0,620.1 724.5,620.1 724.0,620.1 723.5,617.5 723.0,617.5 722.5,617.5 722.0,617.5 721.5,617.5 721.0,617.5 720.5,617.5 720.0,617.5 719.5,617.6 719.0,617.7 718.5,617.8 718.0,617.9 717.5,617.0 717.0,617.1 716.5,617.2 716.0,617.3 715.5,617.4 715.0,617.5 714.5,615.8 714.0,615.9 713.5,616.0 713.0,616.1 712.5,616.2 712.0,616.3 711.5,621.7 711.0,621.8 710.5,621.9 710.0,622.0 709.5,622.9 709.0,623.8 708.5,621.4 708.0,622.3 707.5,623.2 707.0,624.1 706.5,625.0 706.0,625.9 705.5,628.5 705.0,629.4 704.5,630.3 704.0,631.2 703.5,632.1 703.0,632.0 702.5,631.8 702.0,631.4 701.5,631.1 701.0,630.7 700.5,630.3 700.0,629.9 699.5,631.1 699.0,630.8 698.5,630.4 698.0,630.0 697.5,629.6 697.0,629.3 696.5,623.8 696.0,623.4 695.5,623.1 695.0,622.7 694.5,622.3 694.0,621.9 693.5,627.3 693.0,626.9 692.5,626.6 692.0,626.2 691.5,625.8 691.0,625.4 690.5,620.7 690.0,620.4 689.5,620.3 689.0,620.3 688.5,620.2 688.0,620.2 687.5,624.2 687.0,624.1 686.5,624.1 686.0,624.0 685.5,624.0 685.0,623.9 684.5,623.6 684.0,623.6 683.5,623.5 683.0,623.5 682.5,623.4 682.0,623.4 681.5,619.1 681.0,619.1 680.5,619.0 680.0,619.0 679.5,618.9 679.0,618.9 678.5,618.3 678.0,618.2 677.5,618.2 677.0,618.1 676.5,618.1 676.0,618.0 675.5,621.8 675.0,621.7 674.5,621.7 674.0,621.6 673.5,621.6 673.0,621.5 672.5,622.9 672.0,622.9 671.5,622.8 671.0,622.8 670.5,622.7 670.0,622.7 669.5,622.1 669.0,621.9 668.5,621.7 668.0,621.4 667.5,621.2 667.0,620.9 666.5,615.6 666.0,615.3 665.5,615.1 665.0,614.9 664.5,614.6 664.0,614.4 663.5,614.1 663.0,613.9 662.5,613.6 662.0,613.4 661.5,613.2 661.0,612.9 660.5,615.1 660.0,614.9 659.5,614.6 659.0,614.4 658.5,614.2 658.0,613.9 657.5,616.0 657.0,615.7 656.5,615.5 656.0,615.2 655.5,615.0 655.0,614.8 654.5,614.8 654.0,614.6 653.5,614.3 653.0,614.1 652.5,614.5 652.0,615.0 651.5,616.7 651.0,617.1 650.5,617.6 650.0,618.0 649.5,618.5 649.0,618.9 648.5,613.4 648.0,613.8 647.5,614.3 647.0,614.7 646.5,615.2 646.0,615.6 645.5,618.9 645.0,619.3 644.5,619.8 644.0,620.2 643.5,620.7 643.0,621.1 642.5,620.8 642.0,621.3 641.5,621.7 641.0,622.2 640.5,622.6 640.0,623.1 639.5,622.4 639.0,622.9 638.5,623.3 638.0,623.8 637.5,624.2 637.0,624.7 636.5,623.9 636.0,624.3 635.5,624.8 635.0,625.2 634.5,625.7 634.0,626.1 633.5,627.9 633.0,628.4 632.5,628.4 632.0,628.5 631.5,628.5 631.0,628.6 630.5,633.7 630.0,633.8 629.5,633.8 629.0,633.9 628.5,633.9 628.0,634.0 627.5,629.6 627.0,629.6 626.5,629.6 626.0,629.7 625.5,629.7 625.0,629.8 624.5,632.0 624.0,632.0 623.5,632.1 623.0,632.1 622.5,632.2 622.0,632.2 621.5,632.8 621.0,632.7 620.5,632.7 620.0,632.6 619.5,632.6 619.0,632.5 618.5,627.3 618.0,627.2 617.5,627.2 617.0,627.1 616.5,627.0 616.0,627.0 615.5,633.6 615.0,633.6 614.5,633.5 614.0,633.4 613.5,633.4 613.0,633.3 612.5,628.4 612.0,628.3 611.5,628.2 611.0,628.2 610.5,628.1 610.0,628.1 609.5,628.5 609.0,628.5 608.5,628.4 608.0,628.4 607.5,628.3 607.0,628.2 606.5,626.2 606.0,626.1 605.5,626.1 605.0,626.0 604.5,625.9 604.0,625.9 603.5,626.7 603.0,626.7 602.5,626.6 602.0,626.5 601.5,626.5 601.0,626.4 600.5,629.1 600.0,629.1 599.5,629.0 599.0,629.0 598.5,628.9 598.0,628.9 597.5,627.7 597.0,627.7 596.5,627.6 596.0,627.6 595.5,627.5 595.0,627.4 594.5,629.3 594.0,629.2 593.5,629.2 593.0,629.1 592.5,629.1 592.0,629.0 591.5,628.4 591.0,628.4 590.5,628.3 590.0,628.3 589.5,628.2 589.0,628.1 588.5,626.0 588.0,626.0 587.5,625.9 587.0,625.8 586.5,625.8 586.0,625.7 585.5,628.0 585.0,628.0 584.5,627.9 584.0,627.9 583.5,627.8 583.0,627.7 582.5,627.1 582.0,627.0 581.5,627.0 581.0,626.9 580.5,626.8 580.0,626.8 579.5,628.4 579.0,628.4 578.5,628.3 578.0,628.2 577.5,628.2 577.0,628.1 576.5,624.7 576.0,624.7 575.5,624.6 575.0,624.5 574.5,624.5 574.0,624.4 573.5,624.7 573.0,624.7 572.5,624.6 572.0,624.6 571.5,624.5 571.0,624.4 570.5,627.4 570.0,627.4 569.5,627.3 569.0,627.2 568.5,627.2 568.0,627.1 567.5,626.5 567.0,626.4 566.5,626.3 566.0,626.3 565.5,626.2 565.0,626.2 564.5,626.2 564.0,626.2 563.5,626.1 563.0,626.1 562.5,626.0 562.0,625.9 561.5,621.3 561.0,621.2 560.5,621.1 560.0,621.1 559.5,621.0 559.0,621.0 558.5,626.5 558.0,626.4 557.5,626.4 557.0,626.3 556.5,626.3 556.0,626.2 555.5,620.1 555.0,620.0 554.5,620.0 554.0,619.9 553.5,619.8 553.0,619.7 552.5,624.6 552.0,624.5 551.5,624.4 551.0,624.3 550.5,624.2 550.0,624.0 549.5,620.7 549.0,620.6 548.5,620.5 548.0,620.3 547.5,620.2 547.0,620.1 546.5,618.3 546.0,618.2 545.5,618.1 545.0,618.0 544.5,617.8 544.0,617.7 543.5,620.0 543.0,619.9 542.5,619.8 542.0,619.6 541.5,619.5 541.0,619.4 540.5,622.0 540.0,621.8 539.5,621.7 539.0,621.6 538.5,621.5 538.0,621.4 537.5,622.2 537.0,622.1 536.5,622.0 536.0,621.9 535.5,621.7 535.0,621.6 534.5,619.5 534.0,619.4 533.5,619.2 533.0,619.1 532.5,619.0 532.0,618.9 531.5,617.3 531.0,617.2 530.5,617.1 530.0,617.0 529.5,616.8 529.0,616.7 528.5,613.8 528.0,613.7 527.5,613.5 527.0,613.4 526.5,613.3 526.0,613.2 525.5,619.2 525.0,619.1 524.5,619.0 524.0,618.8 523.5,618.7 523.0,618.6 522.5,612.9 522.0,612.8 521.5,612.7 521.0,612.6 520.5,612.5 520.0,612.3 519.5,611.8 519.0,611.7 518.5,611.6 518.0,611.4 517.5,611.3 517.0,611.2 516.5,610.5 516.0,610.4 515.5,610.3 515.0,610.1 514.5,610.0 514.0,609.9 513.5,613.1 513.0,613.0 512.5,612.8 512.0,612.7 511.5,612.6 511.0,612.5 510.5,610.3 510.0,610.2 509.5,610.0 509.0,609.9 508.5,609.8 508.0,609.7 507.5,613.0 507.0,612.9 506.5,612.7 506.0,612.6 505.5,612.5 505.0,612.4 504.5,609.9 504.0,609.7 503.5,609.6 503.0,609.5 502.5,609.4 502.0,609.3 501.5,612.1 501.0,612.0 500.5,611.9 500.0,611.8 499.5,612.4 499.0,613.0 498.5,609.1 498.0,609.7 497.5,610.4 497.0,611.0 496.5,611.6 496.0,612.2 495.5,613.6 495.0,614.2 494.5,614.9 494.0,615.5 493.5,616.1 493.0,616.7 492.5,619.5 492.0,620.1 491.5,620.8 491.0,621.4 490.5,622.0 490.0,622.6 489.5,623.5 489.0,624.1 488.5,624.7 488.0,625.4 487.5,626.3 487.0,627.2 486.5,627.5 486.0,628.4 485.5,629.4 485.0,630.3 484.5,631.2 484.0,632.1 483.5,636.2 483.0,637.2 482.5,638.1 482.0,639.0 481.5,640.0 481.0,640.9 480.5,634.6 480.0,633.8 479.5,632.9 479.0,632.0 478.5,631.2 478.0,630.3 477.5,632.0 477.0,631.1 476.5,630.3 476.0,629.4 475.5,628.5 475.0,627.7 474.5,626.1 474.0,625.2 473.5,624.6 473.0,624.0 472.5,623.4 472.0,622.8 471.5,622.5 471.0,621.9 470.5,621.3 470.0,620.7 469.5,620.1 469.0,619.5 468.5,617.5 468.0,616.9 467.5,616.3 467.0,615.7 466.5,615.1 466.0,614.5 465.5,613.4 465.0,612.8 464.5,612.2 464.0,611.6 463.5,611.6 463.0,611.6 462.5,610.7 462.0,610.7 461.5,610.7 461.0,610.7 460.5,610.7 460.0,610.7 459.5,616.3 459.0,616.3 458.5,616.3 458.0,616.3 457.5,616.3 457.0,616.3 456.5,611.3 456.0,611.3 455.5,611.3 455.0,611.3 454.5,611.3 454.0,611.3 453.5,612.5 453.0,612.5 452.5,612.5 452.0,612.5 451.5,612.5 451.0,612.5 450.5,616.7 450.0,616.7 449.5,616.7 449.0,616.7 448.5,616.7 448.0,616.7 447.5,617.1 447.0,617.1 446.5,617.1 446.0,617.1 445.5,617.1 445.0,617.1 444.5,614.5 444.0,614.7 443.5,614.8 443.0,615.0 442.5,615.2 442.0,615.3 441.5,611.7 441.0,611.9 440.5,612.1 440.0,612.2 439.5,612.4 439.0,612.6 438.5,613.2 438.0,613.3 437.5,613.5 437.0,613.7 436.5,613.8 436.0,614.0 435.5,613.9 435.0,614.1 434.5,614.3 434.0,614.4 433.5,614.6 433.0,614.8 432.5,616.1 432.0,616.1 431.5,616.2 431.0,616.3 430.5,616.4 430.0,616.5 429.5,618.5 429.0,618.6 428.5,618.7 428.0,618.8 427.5,618.9 427.0,619.0 426.5,618.6 426.0,618.7 425.5,618.8 425.0,618.9 424.5,619.0 424.0,619.1 423.5,620.1 423.0,620.2 422.5,620.2 422.0,620.3 421.5,620.4 421.0,620.5 420.5,622.1 420.0,622.2 419.5,622.3 419.0,622.4 418.5,622.5 418.0,622.5 417.5,623.7 417.0,623.7 416.5,623.8 416.0,623.9 415.5,624.0 415.0,624.1 414.5,624.2 414.0,624.3 413.5,624.3 413.0,624.4 412.5,624.5 412.0,624.6 411.5,620.0 411.0,620.1 410.5,620.2 410.0,620.3 409.5,620.4 409.0,620.5 408.5,621.8 408.0,622.0 407.5,622.2 407.0,622.4 406.5,622.6 406.0,622.8 405.5,621.9 405.0,622.1 404.5,622.3 404.0,622.5 403.5,622.7 403.0,622.9 402.5,627.2 402.0,627.4 401.5,627.6 401.0,627.8 400.5,628.0 400.0,628.2 399.5,628.2 399.0,628.4 398.5,628.3 398.0,628.3 397.5,628.2 397.0,628.1 396.5,627.6 396.0,627.5 395.5,627.4 395.0,627.4 394.5,627.3 394.0,627.3 393.5,622.2 393.0,622.1 392.5,622.1 392.0,622.0 391.5,622.0 391.0,621.9 390.5,625.0 390.0,624.9 389.5,624.9 389.0,624.8 388.5,624.8 388.0,624.7 387.5,624.1 387.0,624.1 386.5,624.0 386.0,624.0 385.5,623.9 385.0,623.9 384.5,622.0 384.0,621.9 383.5,621.9 383.0,621.8 382.5,621.8 382.0,621.7 381.5,620.9 381.0,620.9 380.5,620.8 380.0,620.7 379.5,620.7 379.0,620.6 378.5,622.8 378.0,622.8 377.5,622.7 377.0,622.7 376.5,622.6 376.0,622.5 375.5,626.6 375.0,626.6 374.5,626.5 374.0,626.5 373.5,626.4 373.0,626.4 372.5,621.4 372.0,621.4 371.5,621.3 371.0,621.3 370.5,621.2 370.0,621.2 369.5,625.3 369.0,625.2 368.5,625.2 368.0,625.1 367.5,625.1 367.0,625.0 366.5,622.0 366.0,621.9 365.5,621.9 365.0,621.8 364.5,621.7 364.0,621.7 363.5,619.9 363.0,619.9 362.5,619.8 362.0,619.8 361.5,619.7 361.0,619.6 360.5,624.1 360.0,624.1 359.5,624.0 359.0,624.0 358.5,623.9 358.0,623.8 357.5,624.7 357.0,624.6 356.5,624.6 356.0,624.5 355.5,624.4 355.0,624.4 354.5,620.7 354.0,620.6 353.5,620.6 353.0,620.5 352.5,620.4 352.0,620.4 351.5,621.6 351.0,621.6 350.5,621.5 350.0,621.4 349.5,621.4 349.0,621.3 348.5,617.9 348.0,617.9 347.5,617.8 347.0,617.7 346.5,617.7 346.0,617.6 345.5,618.2 345.0,618.2 344.5,618.1 344.0,618.0 343.5,618.0 343.0,617.9 342.5,619.5 342.0,619.4 341.5,619.3 341.0,619.3 340.5,619.2 340.0,619.2 339.5,617.3 339.0,617.3 338.5,617.2 338.0,617.2 337.5,617.1 337.0,617.1 336.5,618.3 336.0,618.3 335.5,618.2 335.0,618.2 334.5,618.1 334.0,618.0 333.5,619.4 333.0,619.4 332.5,619.3 332.0,619.3 331.5,619.2 331.0,619.1 330.5,621.3 330.0,621.2 329.5,621.2 329.0,621.2 328.5,621.2 328.0,621.1 327.5,615.1 327.0,615.1 326.5,615.1 326.0,615.0 325.5,615.0 325.0,615.0 324.5,614.6 324.0,614.5 323.5,614.5 323.0,614.5 322.5,614.4 322.0,614.4 321.5,616.3 321.0,616.3 320.5,616.2 320.0,616.2 319.5,616.2 319.0,616.1 318.5,615.7 318.0,615.7 317.5,615.7 317.0,615.6 316.5,615.6 316.0,615.6 315.5,620.1 315.0,620.1 314.5,620.1 314.0,620.1 313.5,620.0 313.0,620.0 312.5,617.4 312.0,617.4 311.5,617.4 311.0,617.4 310.5,617.3 310.0,617.3 309.5,619.2 309.0,619.1 308.5,619.1 308.0,619.1 307.5,619.1 307.0,619.0 306.5,616.1 306.0,616.1 305.5,616.0 305.0,616.0 304.5,616.0 304.0,616.0 303.5,619.9 303.0,619.8 302.5,619.8 302.0,619.8 301.5,619.8 301.0,619.7 300.5,618.6 300.0,618.6 299.5,618.5 299.0,618.5 298.5,618.5 298.0,618.5 297.5,615.1 297.0,615.1 296.5,615.0 296.0,615.0 295.5,615.0 295.0,615.0 294.5,615.0 294.0,615.0 293.5,615.0 293.0,615.0 292.5,614.9 292.0,614.9 291.5,617.0 291.0,617.0 290.5,617.0 290.0,617.0 289.5,616.9 289.0,616.9 288.5,618.2 288.0,618.2 287.5,618.2 287.0,618.1 286.5,618.1 286.0,618.1 285.5,612.9 285.0,612.9 284.5,612.8 284.0,612.8 283.5,612.8 283.0,612.7 282.5,615.3 282.0,615.3 281.5,615.3 281.0,615.2 280.5,615.2 280.0,615.2 279.5,617.2 279.0,617.2 278.5,617.2 278.0,617.1 277.5,617.1 277.0,617.1 276.5,616.0 276.0,615.9 275.5,616.2 275.0,616.5 274.5,616.8 274.0,617.0 273.5,616.4 273.0,616.6 272.5,616.9 272.0,617.2 271.5,617.4 271.0,617.7 270.5,617.2 270.0,617.5 269.5,617.8 269.0,618.0 268.5,618.3 268.0,618.6 267.5,620.1 267.0,620.4 266.5,620.7 266.0,620.9 265.5,621.2 265.0,621.5 264.5,619.5 264.0,619.8 263.5,620.0 263.0,620.3 262.5,621.6 262.0,622.8 261.5,627.4 261.0,628.7 260.5,630.0 260.0,631.3 259.5,632.5 259.0,633.8 258.5,635.5 258.0,636.7 257.5,638.0 257.0,637.3 256.5,636.5 256.0,635.8 255.5,635.2 255.0,634.5 254.5,633.8 254.0,633.0 253.5,632.3 253.0,631.6 252.5,628.9 252.0,628.2 251.5,627.5 251.0,626.7 250.5,626.0 250.0,625.3 249.5,623.9 249.0,624.1 248.5,624.3 248.0,624.4 247.5,624.6 247.0,624.8 246.5,626.7 246.0,626.9 245.5,627.1 245.0,627.2 244.5,627.4 244.0,627.6 243.5,630.1 243.0,630.2 242.5,630.4 242.0,630.6 241.5,630.8 241.0,630.9 240.5,626.3 240.0,626.5 239.5,626.6 239.0,626.8 238.5,627.0 238.0,627.2 237.5,626.5 237.0,626.7 236.5,626.9 236.0,627.1 235.5,626.9 235.0,626.8 234.5,628.9 234.0,628.7 233.5,628.6 233.0,628.4 232.5,628.3 232.0,628.1 231.5,626.6 231.0,626.5 230.5,626.4 230.0,626.2 229.5,626.1 229.0,625.9 228.5,626.3 228.0,626.1 227.5,626.0 227.0,625.8 226.5,625.7 226.0,625.5 225.5,629.8 225.0,629.6 224.5,629.5 224.0,629.3 223.5,629.2 223.0,629.0 222.5,626.5 222.0,626.3 221.5,626.5 221.0,626.7 220.5,626.9 220.0,627.1 219.5,624.5 219.0,624.7 218.5,624.9 218.0,625.1 217.5,625.3 217.0,625.5 216.5,630.8 216.0,631.0 215.5,631.2 215.0,631.4 214.5,631.6 214.0,631.8 213.5,626.1 213.0,626.3 212.5,626.5 212.0,626.7 211.5,626.7 211.0,626.6 210.5,628.5 210.0,628.5 209.5,628.4 209.0,628.4 208.5,628.4 208.0,628.3 207.5,633.0 207.0,633.0 206.5,632.9 206.0,632.9 205.5,632.9 205.0,632.8 204.5,632.0 204.0,632.0 203.5,631.9 203.0,631.9 202.5,631.9 202.0,631.8 201.5,630.4 201.0,630.3 200.5,630.3 200.0,630.3 199.5,630.2 199.0,630.2 198.5,625.9 198.0,625.9 197.5,625.8 197.0,625.8 196.5,625.7 196.0,625.7 195.5,630.8 195.0,630.8 194.5,630.8 194.0,630.7 193.5,630.7 193.0,630.7 192.5,628.6 192.0,628.6 191.5,628.5 191.0,628.5 190.5,628.5 190.0,628.4 189.5,625.7 189.0,625.6 188.5,625.6 188.0,625.5 187.5,625.5 187.0,625.5 186.5,630.0 186.0,629.9 185.5,629.9 185.0,629.8 184.5,629.8 184.0,629.7 183.5,628.9 183.0,628.8 182.5,628.8 182.0,628.7 181.5,628.7 181.0,628.6 180.5,627.7 180.0,627.7 179.5,627.6 179.0,627.6 178.5,627.5 178.0,627.5 177.5,624.1 177.0,624.0 176.5,624.0 176.0,623.9 175.5,623.9 175.0,623.9 174.5,624.0 174.0,623.9 173.5,623.9 173.0,623.8 172.5,623.8 172.0,623.7 171.5,625.7 171.0,625.7 170.5,625.6 170.0,625.6 169.5,625.5 169.0,625.5 168.5,627.9 168.0,627.8 167.5,627.8 167.0,627.7 166.5,627.7 166.0,627.6 165.5,628.7 165.0,628.7 164.5,628.6 164.0,628.5 163.5,628.4 163.0,628.3 162.5,626.5 162.0,626.4 161.5,626.4 161.0,626.3 160.5,626.2 160.0,626.1 159.5,623.9 159.0,623.8 158.5,623.7 158.0,623.6 157.5,623.5 157.0,623.4 156.5,624.3 156.0,624.2 155.5,624.1 155.0,624.0 154.5,623.9 154.0,623.9 153.5,627.4 153.0,627.3 152.5,627.2 152.0,627.1 151.5,627.0 151.0,626.9 150.5,624.8 150.0,624.7 149.5,624.6 149.0,624.5 148.5,624.4 148.0,624.3 147.5,623.1 147.0,623.1 146.5,623.0 146.0,622.9 145.5,622.8 145.0,622.7 144.5,621.9 144.0,621.8 143.5,621.7 143.0,621.6 142.5,621.5 142.0,621.4 141.5,620.8 141.0,620.7 140.5,620.6 140.0,620.5 139.5,620.5 139.0,620.4 138.5,618.5 138.0,618.5 137.5,618.4 137.0,618.3 136.5,618.2 136.0,618.1 135.5,620.3 135.0,620.2 134.5,620.1 134.0,620.0 133.5,619.9 133.0,619.9 132.5,619.2 132.0,619.1 131.5,619.0 131.0,618.9 130.5,618.8 130.0,618.7 129.5,617.5 129.0,617.5 128.5,617.4 128.0,617.3 127.5,617.2 127.0,617.1 126.5,616.0 126.0,615.9 125.5,615.8 125.0,615.7 124.5,615.6 124.0,615.5 123.5,618.2 123.0,618.1 122.5,618.1 122.0,618.0 121.5,617.9 121.0,617.8 120.5,615.8 120.0,615.7 119.5,615.7 119.0,615.6 118.5,615.5 118.0,615.4 117.5,615.7 117.0,615.6 116.5,615.5 116.0,615.4 115.5,615.3 115.0,615.3 114.5,620.3 114.0,620.2 113.5,620.1 113.0,620.0 112.5,619.9 112.0,619.8 111.5,617.5 111.0,617.4 110.5,617.3 110.0,617.2 109.5,617.1 109.0,617.0 108.5,617.6 108.0,617.5 107.5,617.4 107.0,617.3 106.5,617.2 106.0,617.1 105.5,613.6 105.0,613.5 104.5,613.4 104.0,613.3 103.5,613.2 103.0,613.1 102.5,611.5 102.0,611.4 101.5,611.4 101.0,611.3 100.5,611.2 100.0,611.1 99.5,611.5 99.0,611.4 98.5,611.4 98.0,611.3 97.5,611.2 97.0,611.1 96.5,612.7 96.0,612.7 95.5,612.6 95.0,612.5 94.5,612.4 94.0,612.3 93.5,613.1 93.0,613.0 92.5,612.9 92.0,612.8 91.5,612.7 91.0,612.6 90.5,612.1 90.0,612.0 89.5,611.9 89.0,611.8 88.5,611.7 88.0,611.6 87.5,610.0 87.0,609.9 86.5,609.8 86.0,609.7 85.5,609.7 85.0,609.6 84.5,614.7 84.0,614.6 83.5,614.5 83.0,614.4 82.5,614.3 82.0,614.2 81.5,609.0 81.0,608.9 80.5,608.9 80.0,608.8 79.5,608.8 79.0,608.9 78.5,607.9 78.0,607.9 77.5,608.0 77.0,608.0 76.5,608.1 76.0,608.1 75.5,612.6 75.0,612.6 74.5,612.7 74.0,612.7 73.5,612.8 73.0,612.8 72.5,614.4 72.0,614.5 71.5,614.5 71.0,614.6 70.5,614.6 70.0,614.7 69.5,613.0 69.0,613.0 68.5,613.0 68.0,613.1 67.5,613.1 67.0,613.2 66.5,612.4 66.0,612.4 65.5,612.4 65.0,612.5 64.5,612.5 64.0,612.6 63.5,611.8 63.0,611.9 62.5,611.9 62.0,612.0 61.5,612.0 61.0,612.1 60.5,615.0 60.0,615.0 59.5,615.1 59.0,615.1 58.5,615.2 58.0,615.2 57.5,613.9 57.0,613.9 56.5,614.0 56.0,614.0 55.5,614.1 55.0,614.1 54.5,615.5 54.0,615.5 53.5,615.6 53.0,615.6 52.5,615.7 52.0,615.7 51.5,615.6 51.0,615.6 50.5,615.6 50.0,615.7 49.5,615.7 49.0,615.8 48.5,612.3 48.0,612.4 47.5,612.9 47.0,613.4 46.5,613.9 46.0,614.4 45.5,619.4 45.0,619.9 44.5,620.4 44.0,620.9 43.5,621.4 43.0,621.9 42.5,621.5 42.0,622.0 41.5,622.5 41.0,623.0 40.5,623.5 40.0,624.0 39.5,620.6 39.0,622.1 38.5,623.6 38.0,625.1 37.5,626.6 37.0,628.1 36.5,632.1 36.0,633.6 35.5,635.1 35.0,636.6 34.5,634.9 34.0,633.2 33.5,628.9 33.0,627.2 32.5,625.5 32.0,623.8 31.5,622.1 31.0,620.4 30.5,618.8 30.0,617.1 29.5,615.7 29.0,614.4 28.5,613.0 28.0,611.6 27.5,609.6 27.0,608.3 26.5,606.9 26.0,605.5 25.5,604.1 25.0,602.8 24.5,603.7 24.0,602.3 23.5,601.0 23.0,599.6 22.5,598.2 22.0,596.8 21.5,595.6 21.0,595.5 20.5,595.4 20.0,595.4 19.5,595.3 19.0,595.2 18.5,596.4 18.0,596.3 17.5,596.2 17.0,596.2 16.5,596.1 16.0,596.0 15.5,593.9 15.0,593.8 14.5,593.8 14.0,593.7 13.5,593.6 13.0,593.6 12.5,594.0 12.0,593.9 11.5,593.9 11.0,593.8 10.5,593.7 10.0,593.7 9.5,593.4 9.0,593.4 8.5,593.3 8.0,593.2 7.5,593.2 7.0,593.1" fill="#8a8a8a"/>
<polygon points="7.0,545.8 7.5,537.5 8.0,529.3 8.5,521.0 9.0,512.8 9.5,513.3 10.0,515.7 10.5,516.3 11.0,516.9 11.5,517.5 12.0,518.0 12.5,518.6 13.0,521.7 13.5,522.3 14.0,522.8 14.5,523.4 15.0,524.0 15.5,524.4 16.0,523.0 16.5,523.4 17.0,523.8 17.5,524.3 18.0,524.7 18.5,525.1 19.0,527.1 19.5,527.5 20.0,527.9 20.5,528.3 21.0,528.8 21.5,529.8 22.0,528.2 22.5,529.2 23.0,530.2 23.5,531.2 24.0,532.2 24.5,533.2 25.0,533.7 25.5,537.9 26.0,542.1 26.5,546.2 27.0,550.4 27.5,554.6 28.0,559.7 28.5,563.8 29.0,568.0 29.5,572.2 30.0,576.3 30.5,580.5 31.0,585.5 31.5,588.5 32.0,591.5 32.5,594.5 33.0,597.5 33.5,600.5 34.0,602.1 34.5,605.1 35.0,608.1 35.5,603.3 36.0,598.6 36.5,593.8 37.0,592.0 37.5,587.3 38.0,582.5 38.5,577.8 39.0,573.0 39.5,570.9 40.0,564.9 40.5,562.7 41.0,560.5 41.5,558.4 42.0,556.2 42.5,556.6 43.0,556.5 43.5,556.9 44.0,557.4 44.5,557.8 45.0,558.2 45.5,558.7 46.0,561.9 46.5,562.3 47.0,562.7 47.5,563.2 48.0,563.6 48.5,564.1 49.0,565.8 49.5,566.3 50.0,566.7 50.5,566.7 51.0,566.8 51.5,566.8 52.0,564.4 52.5,564.5 53.0,564.5 53.5,564.6 54.0,564.6 54.5,564.7 55.0,564.0 55.5,564.1 56.0,564.1 56.5,564.2 57.0,564.2 57.5,564.3 58.0,565.9 58.5,566.0 59.0,566.0 59.5,566.1 60.0,566.1 60.5,566.2 61.0,565.2 61.5,565.2 62.0,565.3 62.5,565.3 63.0,565.4 63.5,565.4 64.0,567.7 64.5,567.8 65.0,567.8 65.5,567.9 66.0,567.9 66.5,568.0 67.0,567.6 67.5,567.7 68.0,567.7 68.5,567.8 69.0,567.8 69.5,567.9 70.0,567.8 70.5,567.9 71.0,567.9 71.5,568.0 72.0,568.0 72.5,568.1 73.0,567.2 73.5,567.3 74.0,567.3 74.5,567.4 75.0,567.4 75.5,567.5 76.0,567.0 76.5,567.0 77.0,567.1 77.5,567.1 78.0,567.2 78.5,567.2 79.0,569.2 79.5,569.2 80.0,569.3 80.5,569.3 81.0,569.4 81.5,569.4 82.0,569.8 82.5,569.9 83.0,569.9 83.5,570.0 84.0,570.0 84.5,570.1 85.0,569.3 85.5,569.3 86.0,569.4 86.5,569.4 87.0,569.5 87.5,569.5 88.0,568.0 88.5,568.0 89.0,568.1 89.5,568.1 90.0,568.2 90.5,568.3 91.0,567.0 91.5,567.1 92.0,567.2 92.5,567.3 93.0,567.4 93.5,567.4 94.0,570.0 94.5,570.1 95.0,570.2 95.5,570.3 96.0,570.4 96.5,570.4 97.0,568.6 97.5,568.7 98.0,568.8 98.5,568.9 99.0,568.9 99.5,569.0 100.0,571.3 100.5,571.4 101.0,571.5 101.5,571.6 102.0,571.6 102.5,571.7 103.0,570.4 103.5,570.5 104.0,570.6 104.5,570.7 105.0,570.8 105.5,570.8 106.0,571.8 106.5,571.9 107.0,572.0 107.5,572.1 108.0,572.2 108.5,572.2 109.0,574.2 109.5,574.3 110.0,574.4 110.5,574.5 111.0,574.5 111.5,574.6 112.0,575.1 112.5,575.2 113.0,575.3 113.5,575.4 114.0,575.5 114.5,575.5 115.0,573.8 115.5,573.9 116.0,574.0 116.5,574.1 117.0,574.1 117.5,574.2 118.0,573.6 118.5,573.7 119.0,573.8 119.5,573.8 120.0,573.9 120.5,574.0 121.0,576.6 121.5,576.7 122.0,576.7 122.5,576.8 123.0,576.9 123.5,576.9 124.0,575.8 124.5,575.9 125.0,575.9 125.5,576.0 126.0,576.1 126.5,576.1 127.0,573.1 127.5,573.2 128.0,573.2 128.5,573.3 129.0,573.4 129.5,573.4 130.0,574.1 130.5,574.2 131.0,574.2 131.5,574.3 132.0,574.4 132.5,574.4 133.0,574.6 133.5,574.7 134.0,574.7 134.5,574.8 135.0,574.9 135.5,574.9 136.0,575.7 136.5,575.8 137.0,575.9 137.5,575.9 138.0,576.0 138.5,576.1 139.0,574.3 139.5,574.4 140.0,574.5 140.5,574.5 141.0,574.6 141.5,574.7 142.0,574.9 142.5,574.9 143.0,575.0 143.5,575.1 144.0,575.1 144.5,575.2 145.0,574.9 145.5,574.9 146.0,575.0 146.5,575.1 147.0,575.1 147.5,575.2 148.0,575.6 148.5,575.7 149.0,575.7 149.5,575.8 150.0,575.9 150.5,575.9 151.0,577.7 151.5,577.8 152.0,577.8 152.5,577.9 153.0,578.0 153.5,578.1 154.0,577.5 154.5,577.5 155.0,577.6 155.5,577.7 156.0,577.8 156.5,577.9 157.0,580.4 157.5,580.5 158.0,580.5 158.5,580.6 159.0,580.7 159.5,580.8 160.0,578.8 160.5,578.9 161.0,579.0 161.5,579.1 162.0,579.2 162.5,579.2 163.0,582.4 163.5,582.5 164.0,582.6 164.5,582.7 165.0,582.7 165.5,582.8 166.0,580.2 166.5,580.2 167.0,580.3 167.5,580.4 168.0,580.5 168.5,580.6 169.0,581.9 169.5,582.0 170.0,582.1 170.5,582.2 171.0,582.3 171.5,582.3 172.0,580.2 172.5,580.3 173.0,580.4 173.5,580.4 174.0,580.5 174.5,580.6 175.0,583.9 175.5,584.0 176.0,584.0 176.5,584.1 177.0,584.1 177.5,584.2 178.0,582.4 178.5,582.5 179.0,582.5 179.5,582.6 180.0,582.6 180.5,582.7 181.0,580.9 181.5,581.0 182.0,581.0 182.5,581.1 183.0,581.1 183.5,581.2 184.0,585.1 184.5,581.7 185.0,578.4 185.5,575.1 186.0,571.7 186.5,568.4 187.0,562.4 187.5,555.8 188.0,549.1 188.5,542.4 189.0,535.8 189.5,529.1 190.0,525.4 190.5,520.0 191.0,514.6 191.5,509.2 192.0,503.8 192.5,498.5 193.0,491.3 193.5,486.0 194.0,480.6 194.5,475.2 195.0,469.8 195.5,464.4 196.0,457.8 196.5,452.4 197.0,455.0 197.5,457.6 198.0,460.1 198.5,462.7 199.0,464.0 199.5,466.6 200.0,469.2 200.5,471.8 201.0,474.5 201.5,477.1 202.0,480.8 202.5,483.5 203.0,486.1 203.5,488.7 204.0,491.4 204.5,494.0 205.0,498.6 205.5,501.3 206.0,503.9 206.5,506.6 207.0,509.2 207.5,511.5 208.0,513.3 208.5,515.6 209.0,517.8 209.5,520.1 210.0,522.3 210.5,524.6 211.0,527.5 211.5,529.7 212.0,532.0 212.5,534.2 213.0,536.5 213.5,538.7 214.0,539.6 214.5,541.9 215.0,544.1 215.5,543.5 216.0,543.0 216.5,542.4 217.0,541.8 217.5,541.2 218.0,540.6 218.5,540.1 219.0,539.5 219.5,538.9 220.0,538.3 220.5,537.7 221.0,537.1 221.5,536.6 222.0,536.0 222.5,534.9 223.0,533.1 223.5,532.0 224.0,530.9 224.5,529.8 225.0,528.7 225.5,527.6 226.0,526.4 226.5,525.3 227.0,524.2 227.5,523.1 228.0,522.0 228.5,520.9 229.0,520.6 229.5,519.5 230.0,518.4 230.5,517.3 231.0,516.2 231.5,515.1 232.0,513.1 232.5,514.7 233.0,516.3 233.5,517.8 234.0,519.4 234.5,521.0 235.0,525.6 235.5,527.2 236.0,528.8 236.5,530.3 237.0,531.9 237.5,533.5 238.0,531.3 238.5,532.9 239.0,534.5 239.5,533.2 240.0,532.0 240.5,530.7 241.0,533.5 241.5,532.2 242.0,531.0 242.5,529.7 243.0,528.5 243.5,527.2 244.0,522.0 244.5,520.7 245.0,519.5 245.5,522.5 246.0,525.5 246.5,528.5 247.0,530.9 247.5,533.9 248.0,536.9 248.5,539.9 249.0,542.9 249.5,545.9 250.0,550.2 250.5,555.2 251.0,560.2 251.5,565.2 252.0,570.2 252.5,575.2 253.0,583.1 253.5,588.1 254.0,593.1 254.5,598.1 255.0,603.1 255.5,604.1 256.0,603.2 256.5,604.2 257.0,605.2 257.5,606.2 258.0,607.2 258.5,603.2 259.0,598.9 259.5,594.9 260.0,590.9 260.5,586.9 261.0,582.9 261.5,579.6 262.0,577.8 262.5,574.5 263.0,571.2 263.5,567.9 264.0,564.6 264.5,561.3 265.0,558.3 265.5,555.0 266.0,554.0 266.5,554.6 267.0,555.2 267.5,555.8 268.0,554.7 268.5,555.2 269.0,555.8 269.5,556.4 270.0,557.0 270.5,557.6 271.0,556.9 271.5,557.5 272.0,558.1 272.5,558.7 273.0,559.3 273.5,559.8 274.0,559.9 274.5,560.5 275.0,561.1 275.5,561.2 276.0,561.3 276.5,561.5 277.0,565.4 277.5,565.5 278.0,565.6 278.5,565.7 279.0,565.8 279.5,566.0 280.0,564.6 280.5,564.7 281.0,564.8 281.5,564.9 282.0,565.0 282.5,565.2 283.0,565.7 283.5,565.8 284.0,565.9 284.5,566.0 285.0,566.1 285.5,566.2 286.0,563.1 286.5,563.2 287.0,563.3 287.5,563.4 288.0,563.5 288.5,563.7 289.0,565.3 289.5,565.4 290.0,565.5 290.5,565.6 291.0,565.7 291.5,565.8 292.0,566.2 292.5,566.4 293.0,566.5 293.5,566.6 294.0,566.7 294.5,566.8 295.0,568.6 295.5,568.7 296.0,568.9 296.5,569.0 297.0,569.1 297.5,569.2 298.0,569.2 298.5,569.3 299.0,569.4 299.5,569.5 300.0,569.6 300.5,569.7 301.0,567.0 301.5,567.1 302.0,567.2 302.5,567.3 303.0,567.4 303.5,567.5 304.0,567.0 304.5,567.1 305.0,567.2 305.5,567.3 306.0,567.5 306.5,567.6 307.0,569.9 307.5,570.0 308.0,570.1 308.5,570.2 309.0,570.3 309.5,570.4 310.0,568.9 310.5,569.0 311.0,569.1 311.5,569.2 312.0,569.3 312.5,569.4 313.0,570.5 313.5,570.6 314.0,570.7 314.5,570.8 315.0,570.9 315.5,571.0 316.0,569.9 316.5,570.0 317.0,570.1 317.5,570.2 318.0,570.3 318.5,570.3 319.0,573.9 319.5,573.9 320.0,574.0 320.5,574.1 321.0,574.2 321.5,574.2 322.0,574.9 322.5,575.0 323.0,575.1 323.5,575.1 324.0,575.2 324.5,575.3 325.0,572.6 325.5,572.6 326.0,572.7 326.5,572.8 327.0,572.8 327.5,572.9 328.0,573.9 328.5,574.0 329.0,574.0 329.5,574.1 330.0,574.2 330.5,574.3 331.0,573.1 331.5,573.1 332.0,573.2 332.5,573.3 333.0,573.4 333.5,573.4 334.0,573.2 334.5,573.3 335.0,573.3 335.5,573.4 336.0,573.5 336.5,573.6 337.0,575.1 337.5,575.2 338.0,575.3 338.5,575.4 339.0,575.4 339.5,575.5 340.0,576.2 340.5,576.2 341.0,576.3 341.5,576.4 342.0,576.4 342.5,576.5 343.0,577.7 343.5,577.7 344.0,577.8 344.5,577.9 345.0,577.9 345.5,578.0 346.0,578.3 346.5,578.4 347.0,578.5 347.5,578.5 348.0,578.6 348.5,578.7 349.0,574.1 349.5,574.1 350.0,574.2 350.5,574.3 351.0,574.3 351.5,574.4 352.0,578.1 352.5,578.1 353.0,578.2 353.5,578.3 354.0,578.3 354.5,578.4 355.0,575.0 355.5,575.1 356.0,575.2 356.5,575.2 357.0,575.3 357.5,575.4 358.0,575.9 358.5,576.0 359.0,576.1 359.5,576.1 360.0,576.2 360.5,576.3 361.0,580.1 361.5,580.1 362.0,580.2 362.5,580.2 363.0,580.3 363.5,580.3 364.0,580.2 364.5,580.3 365.0,580.3 365.5,580.4 366.0,580.4 366.5,580.5 367.0,580.7 367.5,580.8 368.0,580.8 368.5,580.9 369.0,580.9 369.5,581.0 370.0,580.4 370.5,580.4 371.0,580.5 371.5,580.6 372.0,580.6 372.5,580.7 373.0,579.7 373.5,579.8 374.0,579.8 374.5,579.9 375.0,579.9 375.5,580.0 376.0,578.7 376.5,578.8 377.0,578.8 377.5,578.9 378.0,578.9 378.5,579.0 379.0,580.9 379.5,580.9 380.0,581.0 380.5,581.0 381.0,581.1 381.5,581.1 382.0,579.0 382.5,579.1 383.0,579.1 383.5,579.2 384.0,579.2 384.5,579.3 385.0,580.1 385.5,580.2 386.0,580.2 386.5,580.3 387.0,580.3 387.5,580.4 388.0,581.4 388.5,581.5 389.0,581.5 389.5,581.6 390.0,581.6 390.5,581.7 391.0,579.5 391.5,579.6 392.0,579.6 392.5,579.7 393.0,579.7 393.5,579.8 394.0,581.6 394.5,581.7 395.0,581.7 395.5,581.8 396.0,581.8 396.5,581.9 397.0,583.9 397.5,584.0 398.0,584.0 398.5,584.1 399.0,584.1 399.5,583.9 400.0,580.6 400.5,580.4 401.0,580.2 401.5,579.9 402.0,579.7 402.5,579.5 403.0,580.1 403.5,579.9 404.0,579.7 404.5,579.5 405.0,579.3 405.5,579.1 406.0,577.0 406.5,574.3 407.0,571.6 407.5,569.0 408.0,566.3 408.5,563.6 409.0,563.2 409.5,558.2 410.0,553.2 410.5,548.2 411.0,543.2 411.5,538.2 412.0,531.5 412.5,526.5 413.0,521.5 413.5,513.4 414.0,505.2 414.5,497.1 415.0,488.3 415.5,480.2 416.0,472.1 416.5,464.0 417.0,455.8 417.5,458.3 418.0,462.4 418.5,464.8 419.0,467.2 419.5,469.6 420.0,472.0 420.5,474.4 421.0,475.4 421.5,477.8 422.0,480.2 422.5,482.6 423.0,485.1 423.5,487.7 424.0,493.6 424.5,496.3 425.0,499.0 425.5,501.6 426.0,504.3 426.5,506.5 427.0,506.7 427.5,508.9 428.0,511.1 428.5,513.3 429.0,515.5 429.5,517.7 430.0,519.1 430.5,521.3 431.0,523.5 431.5,524.6 432.0,525.8 432.5,526.9 433.0,528.3 433.5,529.4 434.0,530.6 434.5,531.7 435.0,532.8 435.5,534.0 436.0,538.5 436.5,539.6 437.0,540.8 437.5,541.9 438.0,543.1 438.5,543.9 439.0,544.9 439.5,545.8 440.0,546.6 440.5,547.5 441.0,548.4 441.5,549.3 442.0,548.8 442.5,549.7 443.0,550.5 443.5,551.4 444.0,552.3 444.5,553.2 445.0,551.0 445.5,551.8 446.0,552.7 446.5,550.0 447.0,547.2 447.5,544.5 448.0,545.2 448.5,542.4 449.0,539.7 449.5,536.9 450.0,534.2 450.5,532.9 451.0,530.2 451.5,528.9 452.0,527.7 452.5,526.4 453.0,525.2 453.5,523.9 454.0,521.4 454.5,520.2 455.0,518.9 455.5,517.7 456.0,516.4 456.5,516.8 457.0,519.7 457.5,520.1 458.0,520.5 458.5,520.9 459.0,521.3 459.5,521.7 460.0,519.8 460.5,520.2 461.0,520.6 461.5,521.1 462.0,521.6 462.5,522.1 463.0,523.3 463.5,523.8 464.0,524.3 464.5,524.8 465.0,525.3 465.5,525.8 466.0,525.6 466.5,526.1 467.0,526.6 467.5,527.1 468.0,527.6 468.5,528.1 469.0,530.8 469.5,533.6 470.0,536.4 470.5,539.2 471.0,542.0 471.5,544.8 472.0,547.1 472.5,549.9 473.0,552.7 473.5,555.5 474.0,558.3 474.5,560.9 475.0,565.6 475.5,568.2 476.0,570.8 476.5,573.4 477.0,576.0 477.5,578.6 478.0,576.5 478.5,579.1 479.0,581.7 479.5,578.5 480.0,575.3 480.5,572.1 481.0,572.4 481.5,569.2 482.0,566.0 482.5,562.8 483.0,559.6 483.5,556.4 484.0,550.1 484.5,549.5 485.0,548.8 485.5,548.2 486.0,547.6 486.5,546.9 487.0,550.0 487.5,549.3 488.0,548.7 488.5,548.0 489.0,547.4 489.5,546.7 490.0,541.9 490.5,541.2 491.0,540.6 491.5,541.7 492.0,542.7 492.5,543.8 493.0,546.2 493.5,547.3 494.0,548.4 494.5,549.4 495.0,550.5 495.5,551.6 496.0,555.9 496.5,557.0 497.0,558.0 497.5,559.1 498.0,560.2 498.5,560.4 499.0,560.2 499.5,560.4 500.0,560.7 500.5,561.0 501.0,561.2 501.5,561.5 502.0,560.6 502.5,560.9 503.0,561.1 503.5,561.4 504.0,561.7 504.5,561.9 505.0,559.6 505.5,559.9 506.0,560.2 506.5,560.4 507.0,560.7 507.5,561.0 508.0,565.6 508.5,565.9 509.0,566.2 509.5,566.4 510.0,566.7 510.5,567.0 511.0,563.1 511.5,563.3 512.0,563.6 512.5,563.9 513.0,564.1 513.5,564.1 514.0,567.8 514.5,567.8 515.0,567.8 515.5,567.8 516.0,567.8 516.5,567.8 517.0,567.4 517.5,567.4 518.0,567.4 518.5,567.4 519.0,567.4 519.5,567.4 520.0,563.7 520.5,563.7 521.0,563.7 521.5,563.7 522.0,563.7 522.5,563.7 523.0,565.8 523.5,565.8 524.0,565.8 524.5,565.8 525.0,565.8 525.5,565.8 526.0,566.8 526.5,566.8 527.0,566.8 527.5,567.3 528.0,567.8 528.5,568.3 529.0,566.3 529.5,566.8 530.0,567.3 530.5,567.8 531.0,568.3 531.5,568.8 532.0,569.0 532.5,569.5 533.0,570.0 533.5,570.5 534.0,571.0 534.5,571.5 535.0,573.3 535.5,573.8 536.0,574.3 536.5,574.8 537.0,575.3 537.5,575.8 538.0,578.6 538.5,578.6 539.0,578.5 539.5,578.5 540.0,578.5 540.5,578.4 541.0,575.5 541.5,575.5 542.0,575.4 542.5,575.4 543.0,575.4 543.5,575.3 544.0,577.5 544.5,577.5 545.0,577.4 545.5,577.4 546.0,577.4 546.5,577.3 547.0,574.0 547.5,574.0 548.0,573.9 548.5,573.9 549.0,573.9 549.5,573.8 550.0,575.8 550.5,575.7 551.0,575.7 551.5,575.7 552.0,575.6 552.5,575.6 553.0,577.6 553.5,577.6 554.0,577.6 554.5,577.6 555.0,577.6 555.5,577.6 556.0,573.9 556.5,573.9 557.0,573.9 557.5,574.0 558.0,574.0 558.5,574.0 559.0,575.1 559.5,575.1 560.0,575.2 560.5,575.2 561.0,575.2 561.5,575.2 562.0,577.8 562.5,577.8 563.0,577.8 563.5,577.8 564.0,577.8 564.5,577.9 565.0,576.9 565.5,576.9 566.0,577.0 566.5,577.0 567.0,577.0 567.5,577.0 568.0,578.3 568.5,578.3 569.0,578.4 569.5,578.4 570.0,578.4 570.5,578.4 571.0,575.4 571.5,575.5 572.0,575.5 572.5,575.5 573.0,575.5 573.5,575.5 574.0,579.2 574.5,579.2 575.0,579.2 575.5,579.2 576.0,579.2 576.5,579.3 577.0,577.5 577.5,577.5 578.0,577.5 578.5,577.5 579.0,577.6 579.5,577.6 580.0,578.8 580.5,578.9 581.0,578.9 581.5,579.0 582.0,579.0 582.5,579.1 583.0,576.5 583.5,576.6 584.0,576.7 584.5,576.8 585.0,576.8 585.5,576.9 586.0,575.2 586.5,575.3 587.0,575.4 587.5,575.5 588.0,575.5 588.5,575.6 589.0,579.5 589.5,579.5 590.0,579.6 590.5,579.7 591.0,579.8 591.5,579.8 592.0,576.5 592.5,576.6 593.0,576.7 593.5,576.7 594.0,576.8 594.5,576.9 595.0,579.6 595.5,579.7 596.0,579.7 596.5,579.8 597.0,579.9 597.5,580.0 598.0,577.5 598.5,577.6 599.0,577.7 599.5,577.7 600.0,577.8 600.5,577.9 601.0,581.2 601.5,581.2 602.0,581.3 602.5,581.4 603.0,581.4 603.5,581.5 604.0,581.0 604.5,581.1 605.0,581.2 605.5,581.3 606.0,581.3 606.5,581.4 607.0,579.3 607.5,579.4 608.0,579.5 608.5,579.6 609.0,579.6 609.5,579.7 610.0,582.6 610.5,582.7 611.0,582.8 611.5,582.9 612.0,582.9 612.5,583.0 613.0,583.6 613.5,583.7 614.0,583.8 614.5,583.9 615.0,583.9 615.5,584.0 616.0,580.4 616.5,580.5 617.0,580.6 617.5,580.7 618.0,580.7 618.5,580.8 619.0,583.7 619.5,583.8 620.0,583.9 620.5,583.9 621.0,584.0 621.5,584.1 622.0,585.0 622.5,584.8 623.0,584.6 623.5,584.4 624.0,584.1 624.5,583.9 625.0,583.1 625.5,582.9 626.0,582.7 626.5,582.5 627.0,582.3 627.5,582.0 628.0,578.4 628.5,578.2 629.0,578.0 629.5,575.2 630.0,572.3 630.5,569.5 631.0,569.2 631.5,566.4 632.0,563.5 632.5,558.5 633.0,553.5 633.5,548.5 634.0,545.0 634.5,540.0 635.0,535.0 635.5,530.0 636.0,525.0 636.5,518.1 637.0,507.0 637.5,500.1 638.0,493.2 638.5,486.3 639.0,479.5 639.5,472.6 640.0,466.1 640.5,459.2 641.0,452.3 641.5,449.4 642.0,452.5 642.5,455.6 643.0,461.2 643.5,464.3 644.0,467.4 644.5,470.5 645.0,473.6 645.5,477.1 646.0,480.3 646.5,483.8 647.0,487.4 647.5,490.9 648.0,494.4 648.5,497.9 649.0,501.4 649.5,504.9 650.0,508.4 650.5,512.0 651.0,515.5 651.5,519.0 652.0,521.5 652.5,525.0 653.0,527.4 653.5,528.2 654.0,528.9 654.5,529.6 655.0,531.9 655.5,532.6 656.0,533.4 656.5,534.1 657.0,534.8 657.5,535.6 658.0,536.4 658.5,537.1 659.0,537.9 659.5,538.6 660.0,539.3 660.5,540.1 661.0,538.7 661.5,538.0 662.0,537.2 662.5,536.5 663.0,535.8 663.5,535.1 664.0,533.7 664.5,533.0 665.0,532.3 665.5,531.6 666.0,530.8 666.5,530.1 667.0,532.7 667.5,531.9 668.0,531.2 668.5,530.5 669.0,529.8 669.5,529.1 670.0,528.6 670.5,527.7 671.0,526.8 671.5,526.0 672.0,525.1 672.5,524.2 673.0,521.0 673.5,520.1 674.0,519.3 674.5,518.4 675.0,517.5 675.5,516.6 676.0,518.1 676.5,517.2 677.0,516.3 677.5,515.8 678.0,516.9 678.5,518.0 679.0,515.1 679.5,516.2 680.0,517.3 680.5,518.4 681.0,519.5 681.5,521.6 682.0,528.2 682.5,530.3 683.0,532.3 683.5,534.4 684.0,536.5 684.5,538.5 685.0,536.7 685.5,538.7 686.0,537.5 686.5,535.4 687.0,533.4 687.5,531.3 688.0,529.5 688.5,527.4 689.0,525.4 689.5,523.8 690.0,522.3 690.5,520.8 691.0,519.2 691.5,517.6 692.0,519.7 692.5,522.6 693.0,525.5 693.5,528.4 694.0,534.6 694.5,539.0 695.0,543.3 695.5,547.6 696.0,552.0 696.5,556.3 697.0,556.6 697.5,560.0 698.0,563.4 698.5,566.8 699.0,570.2 699.5,573.6 700.0,578.9 700.5,582.3 701.0,585.7 701.5,589.1 702.0,592.5 702.5,590.5 703.0,589.7 703.5,587.7 704.0,585.7 704.5,583.7 705.0,581.7 705.5,579.7 706.0,575.4 706.5,573.4 707.0,571.4 707.5,569.4 708.0,567.4 708.5,566.2 709.0,566.9 709.5,565.7 710.0,564.4 710.5,563.1 711.0,561.9 711.5,560.6 712.0,558.0 712.5,556.8 713.0,555.5 713.5,554.2 714.0,553.0 714.5,552.4 715.0,551.8 715.5,552.2 716.0,552.7 716.5,553.1 717.0,553.5 717.5,553.9 718.0,558.4 718.5,558.8 719.0,559.3 719.5,559.7 720.0,560.1 720.5,560.5 721.0,558.6 721.5,559.0 722.0,559.5 722.5,559.9 723.0,560.3 723.5,560.7 724.0,563.0 724.5,563.4 725.0,563.8 725.5,563.9 726.0,564.0 726.5,564.0 727.0,560.5 727.5,560.6 728.0,560.6 728.5,560.7 729.0,560.7 729.5,560.8 730.0,562.8 730.5,562.9 731.0,563.0 731.5,563.0 732.0,563.1 732.5,563.1 733.0,560.8 733.5,560.8 734.0,560.9 734.5,561.0 735.0,561.0 735.5,561.1 736.0,561.8 736.5,561.8 737.0,561.9 737.5,561.9 738.0,562.0 738.5,562.1 739.0,565.3 739.5,565.3 740.0,565.4 740.5,565.4 741.0,565.5 741.5,565.6 742.0,564.2 742.5,564.3 743.0,564.3 743.5,564.4 744.0,564.5 744.5,564.5 745.0,566.6 745.5,566.7 746.0,566.7 746.5,566.8 747.0,566.9 747.5,566.9 748.0,562.7 748.5,562.8 749.0,562.8 749.5,562.9 750.0,562.9 750.0,590.1 749.5,590.1 749.0,590.1 748.5,590.0 748.0,590.0 747.5,595.1 747.0,595.0 746.5,595.0 746.0,595.0 745.5,595.0 745.0,594.9 744.5,592.1 744.0,592.0 743.5,592.0 743.0,592.0 742.5,592.0 742.0,591.9 741.5,592.8 741.0,592.8 740.5,592.7 740.0,592.7 739.5,592.7 739.0,592.7 738.5,591.7 738.0,591.7 737.5,591.7 737.0,591.7 736.5,591.6 736.0,591.6 735.5,591.3 735.0,591.3 734.5,591.3 734.0,591.3 733.5,591.2 733.0,591.2 732.5,593.5 732.0,593.5 731.5,593.4 731.0,593.4 730.5,593.4 730.0,593.4 729.5,591.6 729.0,591.5 728.5,591.5 728.0,591.5 727.5,591.4 727.0,591.4 726.5,593.5 726.0,593.5 725.5,593.5 725.0,593.4 724.5,593.2 724.0,593.1 723.5,590.6 723.0,590.4 722.5,590.2 722.0,590.0 721.5,589.8 721.0,589.6 720.5,590.5 720.0,590.3 719.5,590.2 719.0,590.0 718.5,589.9 718.0,589.8 717.5,587.3 717.0,587.1 716.5,587.0 716.0,586.9 715.5,586.7 715.0,586.6 714.5,585.9 714.0,586.2 713.5,586.8 713.0,587.5 712.5,588.1 712.0,588.7 711.5,592.8 711.0,593.5 710.5,594.1 710.0,594.7 709.5,595.8 709.0,596.9 708.5,595.2 708.0,596.3 707.5,597.7 707.0,599.1 706.5,600.5 706.0,601.9 705.5,605.2 705.0,606.6 704.5,608.0 704.0,609.4 703.5,610.8 703.0,611.6 702.5,611.9 702.0,612.5 701.5,610.8 701.0,609.1 700.5,607.3 700.0,605.6 699.5,603.9 699.0,602.2 698.5,600.4 698.0,598.7 697.5,597.0 697.0,595.2 696.5,592.1 696.0,589.9 695.5,587.8 695.0,585.6 694.5,583.5 694.0,581.3 693.5,581.5 693.0,579.9 692.5,578.4 692.0,576.9 691.5,575.8 691.0,576.3 690.5,574.4 690.0,574.9 689.5,575.5 689.0,576.2 688.5,577.1 688.0,578.0 687.5,581.0 687.0,581.9 686.5,582.8 686.0,583.7 685.5,584.3 685.0,583.3 684.5,584.0 684.0,583.0 683.5,582.1 683.0,581.1 682.5,580.1 682.0,579.2 681.5,573.9 681.0,572.9 680.5,572.4 680.0,571.9 679.5,571.3 679.0,570.8 678.5,571.8 678.0,571.3 677.5,570.8 677.0,571.0 676.5,571.3 676.0,571.7 675.5,573.1 675.0,573.5 674.5,573.8 674.0,574.2 673.5,574.6 673.0,574.9 672.5,577.2 672.0,577.5 671.5,577.9 671.0,578.3 670.5,578.6 670.0,579.0 669.5,578.9 669.0,579.1 668.5,579.3 668.0,579.5 667.5,579.7 667.0,579.9 666.5,575.8 666.0,576.0 665.5,576.2 665.0,576.3 664.5,576.5 664.0,576.7 663.5,577.2 663.0,577.4 662.5,577.6 662.0,577.8 661.5,578.0 661.0,578.2 660.5,580.0 660.0,579.5 659.5,579.1 659.0,578.6 658.5,578.1 658.0,577.7 657.5,578.4 657.0,578.0 656.5,577.5 656.0,577.1 655.5,576.6 655.0,576.1 654.5,575.1 654.0,574.7 653.5,574.2 653.0,573.8 652.5,572.9 652.0,571.6 651.5,571.4 651.0,570.0 650.5,568.7 650.0,567.4 649.5,566.0 649.0,564.7 648.5,560.1 648.0,558.7 647.5,557.4 647.0,556.1 646.5,554.7 646.0,553.4 645.5,553.7 645.0,552.4 644.5,551.3 644.0,550.1 643.5,549.0 643.0,547.8 642.5,545.1 642.0,544.0 641.5,542.8 641.0,544.4 640.5,547.7 640.0,551.1 639.5,553.6 639.0,557.0 638.5,560.3 638.0,563.7 637.5,567.0 637.0,570.4 636.5,574.9 636.0,578.3 635.5,580.8 635.0,583.3 634.5,585.7 634.0,588.2 633.5,590.9 633.0,593.4 632.5,595.6 632.0,597.9 631.5,599.2 631.0,600.5 630.5,603.5 630.0,604.8 629.5,606.1 629.0,607.4 628.5,607.5 628.0,607.6 627.5,606.8 627.0,606.9 626.5,607.1 626.0,607.2 625.5,607.3 625.0,607.4 624.5,609.0 624.0,609.1 623.5,609.3 623.0,609.4 622.5,609.5 622.0,609.6 621.5,609.5 621.0,609.5 620.5,609.4 620.0,609.3 619.5,609.3 619.0,609.2 618.5,605.0 618.0,604.9 617.5,604.9 617.0,604.8 616.5,604.8 616.0,604.7 615.5,609.9 615.0,609.9 614.5,609.8 614.0,609.7 613.5,609.7 613.0,609.6 612.5,606.6 612.0,606.5 611.5,606.5 611.0,606.4 610.5,606.3 610.0,606.3 609.5,605.2 609.0,605.1 608.5,605.1 608.0,605.0 607.5,604.9 607.0,604.9 606.5,604.7 606.0,604.6 605.5,604.5 605.0,604.5 604.5,604.4 604.0,604.4 603.5,605.0 603.0,605.0 602.5,604.9 602.0,604.8 601.5,604.8 601.0,604.7 600.5,604.7 600.0,604.7 599.5,604.6 599.0,604.5 598.5,604.5 598.0,604.4 597.5,604.9 597.0,604.8 596.5,604.8 596.0,604.7 595.5,604.6 595.0,604.6 594.5,604.4 594.0,604.3 593.5,604.2 593.0,604.2 592.5,604.1 592.0,604.0 591.5,605.2 591.0,605.1 590.5,605.1 590.0,605.0 589.5,605.0 589.0,604.9 588.5,602.0 588.0,601.9 587.5,601.9 587.0,601.8 586.5,601.7 586.0,601.7 585.5,603.7 585.0,603.6 584.5,603.5 584.0,603.5 583.5,603.4 583.0,603.4 582.5,604.1 582.0,604.1 581.5,604.0 581.0,603.9 580.5,603.9 580.0,603.9 579.5,604.2 579.0,604.2 578.5,604.1 578.0,604.1 577.5,604.0 577.0,604.0 576.5,602.9 576.0,602.9 575.5,602.8 575.0,602.8 574.5,602.7 574.0,602.7 573.5,601.2 573.0,601.2 572.5,601.2 572.0,601.1 571.5,601.1 571.0,601.0 570.5,604.0 570.0,604.0 569.5,603.9 569.0,603.9 568.5,603.8 568.0,603.8 567.5,602.9 567.0,602.8 566.5,602.8 566.0,602.7 565.5,602.7 565.0,602.7 564.5,603.1 564.0,603.1 563.5,603.0 563.0,603.0 562.5,602.9 562.0,602.9 561.5,599.2 561.0,599.1 560.5,599.1 560.0,599.1 559.5,599.0 559.0,599.0 558.5,601.5 558.0,601.5 557.5,601.4 557.0,601.4 556.5,601.4 556.0,601.3 555.5,599.6 555.0,599.6 554.5,599.5 554.0,599.5 553.5,599.5 553.0,599.4 552.5,601.2 552.0,601.2 551.5,601.1 551.0,601.1 550.5,601.0 550.0,601.0 549.5,598.3 549.0,598.2 548.5,598.2 548.0,598.1 547.5,598.1 547.0,598.0 546.5,598.5 546.0,598.5 545.5,598.4 545.0,598.4 544.5,598.3 544.0,598.3 543.5,598.5 543.0,598.5 542.5,598.4 542.0,598.4 541.5,598.3 541.0,598.3 540.5,601.0 540.0,601.0 539.5,600.9 539.0,600.9 538.5,600.8 538.0,600.8 537.5,600.0 537.0,599.7 536.5,599.4 536.0,599.1 535.5,598.8 535.0,598.5 534.5,596.5 534.0,596.2 533.5,595.9 533.0,595.6 532.5,595.4 532.0,595.1 531.5,594.1 531.0,593.8 530.5,593.5 530.0,593.2 529.5,592.9 529.0,592.7 528.5,592.0 528.0,591.7 527.5,591.4 527.0,591.1 526.5,591.0 526.0,591.0 525.5,593.8 525.0,593.7 524.5,593.7 524.0,593.6 523.5,593.5 523.0,593.5 522.5,589.4 522.0,589.3 521.5,589.3 521.0,589.2 520.5,589.2 520.0,589.1 519.5,590.5 519.0,590.4 518.5,590.4 518.0,590.3 517.5,590.2 517.0,590.2 516.5,589.9 516.0,589.9 515.5,589.8 515.0,589.7 514.5,589.7 514.0,589.6 513.5,589.7 513.0,589.6 512.5,589.4 512.0,589.3 511.5,589.1 511.0,588.9 510.5,589.4 510.0,589.3 509.5,589.1 509.0,588.9 508.5,588.7 508.0,588.5 507.5,588.2 507.0,588.0 506.5,587.9 506.0,587.7 505.5,587.5 505.0,587.3 504.5,586.9 504.0,586.8 503.5,586.6 503.0,586.4 502.5,586.2 502.0,586.0 501.5,588.0 501.0,587.8 500.5,587.6 500.0,587.4 499.5,587.7 499.0,587.9 498.5,585.9 498.0,586.1 497.5,586.0 497.0,585.8 496.5,585.7 496.0,585.5 495.5,584.4 495.0,584.2 494.5,584.1 494.0,583.9 493.5,583.8 493.0,583.7 492.5,584.1 492.0,584.0 491.5,583.8 491.0,583.7 490.5,584.3 490.0,584.9 489.5,587.6 489.0,588.2 488.5,588.9 488.0,589.5 487.5,590.3 487.0,591.1 486.5,589.9 486.0,590.7 485.5,591.5 485.0,592.3 484.5,593.1 484.0,593.9 483.5,598.9 483.0,600.9 482.5,602.8 482.0,604.8 481.5,606.7 481.0,608.7 480.5,605.1 480.0,606.1 479.5,607.1 479.0,608.0 478.5,606.4 478.0,604.8 477.5,606.6 477.0,605.0 476.5,603.3 476.0,601.7 475.5,600.1 475.0,598.4 474.5,595.4 474.0,593.8 473.5,592.2 473.0,590.6 472.5,589.0 472.0,587.4 471.5,586.2 471.0,584.6 470.5,583.0 470.0,581.4 469.5,579.9 469.0,578.3 468.5,575.9 468.0,575.4 467.5,574.8 467.0,574.2 466.5,573.7 466.0,573.1 465.5,572.6 465.0,572.1 464.5,571.5 464.0,571.0 463.5,570.7 463.0,570.5 462.5,569.5 462.0,569.2 461.5,569.0 461.0,568.8 460.5,568.6 460.0,568.4 459.5,572.3 459.0,572.2 458.5,572.0 458.0,571.8 457.5,571.6 457.0,571.4 456.5,567.4 456.0,567.3 455.5,567.8 455.0,568.4 454.5,568.9 454.0,569.5 453.5,571.3 453.0,571.9 452.5,572.4 452.0,573.0 451.5,573.6 451.0,574.1 450.5,577.6 450.0,578.2 449.5,579.4 449.0,580.7 448.5,581.9 448.0,583.1 447.5,583.1 447.0,584.3 446.5,585.5 446.0,586.8 445.5,586.4 445.0,586.0 444.5,585.5 444.0,585.2 443.5,584.9 443.0,584.6 442.5,584.3 442.0,584.0 441.5,582.3 441.0,582.0 440.5,581.7 440.0,581.4 439.5,581.1 439.0,580.8 438.5,580.7 438.0,580.4 437.5,579.9 437.0,579.5 436.5,579.1 436.0,578.7 435.5,576.6 435.0,576.2 434.5,575.8 434.0,575.3 433.5,574.9 433.0,574.5 432.5,574.6 432.0,574.1 431.5,573.7 431.0,573.2 430.5,572.2 430.0,571.3 429.5,571.8 429.0,570.9 428.5,569.9 428.0,569.0 427.5,568.0 427.0,567.1 426.5,566.8 426.0,565.9 425.5,564.7 425.0,563.6 424.5,562.4 424.0,561.3 423.5,559.2 423.0,558.0 422.5,557.0 422.0,555.9 421.5,554.9 421.0,553.8 420.5,554.3 420.0,553.3 419.5,552.2 419.0,551.2 418.5,550.2 418.0,549.1 417.5,547.9 417.0,546.8 416.5,550.5 416.0,554.2 415.5,557.9 415.0,561.6 414.5,565.6 414.0,569.3 413.5,573.0 413.0,576.7 412.5,579.0 412.0,581.3 411.5,581.9 411.0,584.2 410.5,586.5 410.0,588.8 409.5,591.1 409.0,593.4 408.5,594.3 408.0,595.6 407.5,596.9 407.0,598.2 406.5,599.5 406.0,600.8 405.5,601.3 405.0,601.5 404.5,601.7 404.0,601.9 403.5,602.1 403.0,602.3 402.5,604.4 402.0,604.6 401.5,604.8 401.0,605.0 400.5,605.2 400.0,605.4 399.5,606.9 399.0,607.1 398.5,607.1 398.0,607.0 397.5,607.0 397.0,606.9 396.5,605.6 396.0,605.6 395.5,605.5 395.0,605.5 394.5,605.4 394.0,605.4 393.5,601.7 393.0,601.7 392.5,601.6 392.0,601.6 391.5,601.5 391.0,601.5 390.5,604.1 390.0,604.1 389.5,604.0 389.0,604.0 388.5,603.9 388.0,603.9 387.5,603.1 387.0,603.1 386.5,603.0 386.0,602.9 385.5,602.9 385.0,602.8 384.5,601.4 384.0,601.4 383.5,601.3 383.0,601.3 382.5,601.2 382.0,601.1 381.5,601.7 381.0,601.6 380.5,601.6 380.0,601.5 379.5,601.4 379.0,601.4 378.5,601.8 378.0,601.7 377.5,601.6 377.0,601.6 376.5,601.5 376.0,601.5 375.5,604.3 375.0,604.2 374.5,604.2 374.0,604.1 373.5,604.1 373.0,604.0 372.5,601.7 372.0,601.7 371.5,601.6 371.0,601.6 370.5,601.5 370.0,601.5 369.5,604.0 369.0,603.9 368.5,603.9 368.0,603.8 367.5,603.8 367.0,603.7 366.5,602.0 366.0,601.9 365.5,601.8 365.0,601.8 364.5,601.7 364.0,601.7 363.5,600.8 363.0,600.7 362.5,600.6 362.0,600.6 361.5,600.5 361.0,600.5 360.5,601.2 360.0,601.2 359.5,601.1 359.0,601.1 358.5,601.0 358.0,600.9 357.5,601.1 357.0,601.1 356.5,601.0 356.0,600.9 355.5,600.9 355.0,600.8 354.5,600.3 354.0,600.2 353.5,600.2 353.0,600.1 352.5,600.1 352.0,600.0 351.5,599.0 351.0,599.0 350.5,598.9 350.0,598.8 349.5,598.8 349.0,598.7 348.5,598.9 348.0,598.8 347.5,598.8 347.0,598.7 346.5,598.7 346.0,598.6 345.5,598.8 345.0,598.7 344.5,598.6 344.0,598.6 343.5,598.5 343.0,598.5 342.5,598.8 342.0,598.7 341.5,598.7 341.0,598.6 340.5,598.5 340.0,598.5 339.5,597.2 339.0,597.1 338.5,597.0 338.0,597.0 337.5,596.9 337.0,596.8 336.5,596.8 336.0,596.8 335.5,596.7 335.0,596.6 334.5,596.6 334.0,596.5 333.5,597.4 333.0,597.3 332.5,597.3 332.0,597.2 331.5,597.1 331.0,597.1 330.5,598.8 330.0,598.7 329.5,598.7 329.0,598.6 328.5,598.6 328.0,598.5 327.5,594.8 327.0,594.7 326.5,594.7 326.0,594.6 325.5,594.6 325.0,594.5 324.5,595.5 324.0,595.5 323.5,595.4 323.0,595.4 322.5,595.3 322.0,595.3 321.5,596.0 321.0,596.0 320.5,595.9 320.0,595.9 319.5,595.8 319.0,595.8 318.5,593.9 318.0,593.9 317.5,593.8 317.0,593.8 316.5,593.7 316.0,593.7 315.5,596.7 315.0,596.6 314.5,596.6 314.0,596.5 313.5,596.4 313.0,596.4 312.5,594.5 312.0,594.4 311.5,594.4 311.0,594.3 310.5,594.2 310.0,594.2 309.5,595.9 309.0,595.8 308.5,595.7 308.0,595.7 307.5,595.6 307.0,595.6 306.5,592.9 306.0,592.8 305.5,592.8 305.0,592.7 304.5,592.7 304.0,592.6 303.5,595.0 303.0,594.9 302.5,594.8 302.0,594.8 301.5,594.7 301.0,594.6 300.5,595.3 300.0,595.2 299.5,595.1 299.0,595.1 298.5,595.0 298.0,594.9 297.5,593.1 297.0,593.0 296.5,593.0 296.0,592.9 295.5,592.8 295.0,592.8 294.5,592.0 294.0,591.9 293.5,591.8 293.0,591.8 292.5,591.7 292.0,591.7 291.5,592.7 291.0,592.6 290.5,592.5 290.0,592.5 289.5,592.4 289.0,592.3 288.5,592.3 288.0,592.3 287.5,592.2 287.0,592.1 286.5,592.1 286.0,592.0 285.5,590.5 285.0,590.5 284.5,590.4 284.0,590.3 283.5,590.3 283.0,590.2 282.5,591.4 282.0,591.3 281.5,591.3 281.0,591.2 280.5,591.1 280.0,591.1 279.5,592.8 279.0,592.7 278.5,592.7 278.0,592.6 277.5,592.6 277.0,592.5 276.5,590.1 276.0,590.0 275.5,590.1 275.0,590.2 274.5,590.1 274.0,590.0 273.5,589.6 273.0,589.5 272.5,589.3 272.0,589.2 271.5,589.1 271.0,589.0 270.5,589.1 270.0,588.9 269.5,588.8 269.0,588.7 268.5,588.6 268.0,588.5 267.5,589.8 267.0,589.7 266.5,589.6 266.0,589.5 265.5,590.1 265.0,591.7 264.5,592.0 264.0,593.6 263.5,595.2 263.0,596.9 262.5,599.0 262.0,601.2 261.5,604.6 261.0,606.8 260.5,609.3 260.0,611.8 259.5,614.3 259.0,616.8 258.5,619.6 258.0,622.1 257.5,622.3 257.0,621.5 256.5,620.6 256.0,619.8 255.5,619.9 255.0,619.0 254.5,616.4 254.0,613.7 253.5,611.1 253.0,608.4 252.5,603.4 252.0,600.8 251.5,598.1 251.0,595.4 250.5,592.8 250.0,590.1 249.5,587.5 249.0,586.2 248.5,585.0 248.0,583.7 247.5,582.5 247.0,581.2 246.5,581.1 246.0,579.9 245.5,578.6 245.0,577.4 244.5,578.1 244.0,578.7 243.5,582.4 243.0,583.1 242.5,583.8 242.0,584.4 241.5,585.1 241.0,585.7 240.5,581.9 240.0,582.6 239.5,583.3 239.0,583.9 238.5,583.3 238.0,582.7 237.5,583.3 237.0,582.7 236.5,582.1 236.0,581.5 235.5,580.7 235.0,579.9 234.5,579.0 234.0,578.2 233.5,577.4 233.0,576.6 232.5,575.8 232.0,575.0 231.5,575.1 231.0,575.5 230.5,575.9 230.0,576.4 229.5,576.8 229.0,577.2 228.5,577.5 228.0,577.9 227.5,578.3 227.0,578.7 226.5,579.2 226.0,579.6 225.5,582.5 225.0,582.9 224.5,583.3 224.0,583.7 223.5,584.1 223.0,584.5 222.5,583.9 222.0,584.3 221.5,584.7 221.0,585.1 220.5,585.4 220.0,585.8 219.5,584.6 219.0,585.0 218.5,585.4 218.0,585.7 217.5,586.1 217.0,586.5 216.5,589.7 216.0,590.0 215.5,590.4 215.0,590.8 214.5,589.9 214.0,589.0 213.5,585.4 213.0,584.5 212.5,583.6 212.0,582.7 211.5,581.7 211.0,580.6 210.5,580.4 210.0,579.4 209.5,578.3 209.0,577.3 208.5,576.3 208.0,575.2 207.5,577.0 207.0,575.9 206.5,574.7 206.0,573.5 205.5,572.3 205.0,571.1 204.5,568.6 204.0,567.4 203.5,566.2 203.0,564.9 202.5,563.7 202.0,562.5 201.5,560.1 201.0,558.8 200.5,557.6 200.0,556.4 199.5,555.2 199.0,554.1 198.5,551.1 198.0,549.9 197.5,548.8 197.0,547.6 196.5,546.4 196.0,548.8 195.5,554.6 195.0,557.0 194.5,559.4 194.0,561.8 193.5,564.2 193.0,566.6 192.5,568.7 192.0,571.1 191.5,573.5 191.0,575.9 190.5,578.3 190.0,580.7 189.5,580.9 189.0,583.8 188.5,586.8 188.0,589.8 187.5,592.8 187.0,595.8 186.5,600.9 186.0,602.4 185.5,603.9 185.0,605.3 184.5,606.8 184.0,608.3 183.5,606.0 183.0,606.0 182.5,605.9 182.0,605.9 181.5,605.8 181.0,605.8 180.5,606.1 180.0,606.1 179.5,606.0 179.0,606.0 178.5,605.9 178.0,605.9 177.5,604.8 177.0,604.7 176.5,604.7 176.0,604.6 175.5,604.6 175.0,604.5 174.5,603.1 174.0,603.0 173.5,603.0 173.0,602.9 172.5,602.8 172.0,602.8 171.5,604.8 171.0,604.8 170.5,604.7 170.0,604.7 169.5,604.6 169.0,604.5 168.5,605.2 168.0,605.2 167.5,605.1 167.0,605.0 166.5,605.0 166.0,604.9 165.5,606.7 165.0,606.7 164.5,606.6 164.0,606.5 163.5,606.4 163.0,606.3 162.5,603.9 162.0,603.8 161.5,603.7 161.0,603.6 160.5,603.6 160.0,603.5 159.5,603.1 159.0,603.0 158.5,603.0 158.0,602.9 157.5,602.8 157.0,602.7 156.5,602.0 156.0,602.0 155.5,601.9 155.0,601.8 154.5,601.7 154.0,601.6 153.5,603.8 153.0,603.7 152.5,603.7 152.0,603.6 151.5,603.5 151.0,603.4 150.5,601.5 150.0,601.4 149.5,601.3 149.0,601.2 148.5,601.1 148.0,601.1 147.5,600.2 147.0,600.1 146.5,600.1 146.0,600.0 145.5,599.9 145.0,599.8 144.5,599.5 144.0,599.5 143.5,599.4 143.0,599.3 142.5,599.2 142.0,599.1 141.5,598.7 141.0,598.6 140.5,598.5 140.0,598.5 139.5,598.4 139.0,598.3 138.5,598.1 138.0,598.0 137.5,597.9 137.0,597.8 136.5,597.8 136.0,597.7 135.5,598.5 135.0,598.5 134.5,598.4 134.0,598.3 133.5,598.2 133.0,598.1 132.5,597.7 132.0,597.6 131.5,597.5 131.0,597.5 130.5,597.4 130.0,597.3 129.5,596.3 129.0,596.3 128.5,596.2 128.0,596.1 127.5,596.0 127.0,596.0 126.5,596.7 126.0,596.6 125.5,596.5 125.0,596.5 124.5,596.4 124.0,596.3 123.5,598.3 123.0,598.2 122.5,598.1 122.0,598.1 121.5,598.0 121.0,597.9 120.5,595.7 120.0,595.6 119.5,595.5 119.0,595.4 118.5,595.3 118.0,595.2 117.5,595.7 117.0,595.6 116.5,595.5 116.0,595.4 115.5,595.3 115.0,595.3 114.5,598.8 114.0,598.7 113.5,598.6 113.0,598.5 112.5,598.5 112.0,598.4 111.5,596.8 111.0,596.8 110.5,596.7 110.0,596.6 109.5,596.5 109.0,596.4 108.5,595.8 108.0,595.7 107.5,595.6 107.0,595.6 106.5,595.5 106.0,595.4 105.5,593.0 105.0,592.9 104.5,592.8 104.0,592.7 103.5,592.6 103.0,592.6 102.5,592.3 102.0,592.2 101.5,592.1 101.0,592.0 100.5,591.9 100.0,591.8 99.5,591.1 99.0,591.0 98.5,590.9 98.0,590.8 97.5,590.7 97.0,590.6 96.5,592.4 96.0,592.3 95.5,592.2 95.0,592.1 94.5,592.0 94.0,591.9 93.5,591.2 93.0,591.1 92.5,591.0 92.0,590.9 91.5,590.8 91.0,590.8 90.5,591.0 90.0,590.9 89.5,590.9 89.0,590.8 88.5,590.7 88.0,590.6 87.5,590.4 87.0,590.4 86.5,590.3 86.0,590.2 85.5,590.2 85.0,590.1 84.5,593.2 84.0,593.2 83.5,593.1 83.0,593.0 82.5,593.0 82.0,592.9 81.5,589.9 81.0,589.8 80.5,589.7 80.0,589.6 79.5,589.6 79.0,589.7 78.5,588.2 78.0,588.2 77.5,588.2 77.0,588.2 76.5,588.2 76.0,588.2 75.5,590.9 75.0,591.0 74.5,591.0 74.0,591.0 73.5,591.0 73.0,591.0 72.5,592.2 72.0,592.2 71.5,592.2 71.0,592.2 70.5,592.2 70.0,592.2 69.5,591.3 69.0,591.3 68.5,591.3 68.0,591.3 67.5,591.3 67.0,591.3 66.5,591.0 66.0,591.0 65.5,591.1 65.0,591.1 64.5,591.1 64.0,591.1 63.5,589.6 63.0,589.6 62.5,589.6 62.0,589.6 61.5,589.6 61.0,589.6 60.5,591.7 60.0,591.7 59.5,591.7 59.0,591.7 58.5,591.7 58.0,591.7 57.5,590.2 57.0,590.2 56.5,590.2 56.0,590.2 55.5,590.2 55.0,590.2 54.5,591.3 54.0,591.3 53.5,591.3 53.0,591.3 52.5,591.3 52.0,591.3 51.5,592.3 51.0,592.3 50.5,592.3 50.0,592.3 49.5,592.1 49.0,591.9 48.5,589.2 48.0,589.1 47.5,589.2 47.0,589.2 46.5,589.3 46.0,589.4 45.5,590.7 45.0,590.8 44.5,590.9 44.0,590.9 43.5,591.0 43.0,591.1 42.5,591.0 42.0,591.1 41.5,592.3 41.0,593.6 40.5,594.8 40.0,596.1 39.5,596.9 39.0,598.7 38.5,601.7 38.0,604.6 37.5,607.6 37.0,610.5 36.5,613.5 36.0,616.5 35.5,619.5 35.0,622.4 34.5,620.2 34.0,617.9 33.5,614.8 33.0,612.5 32.5,610.2 32.0,607.9 31.5,605.6 31.0,603.3 30.5,600.2 30.0,597.4 29.5,594.8 29.0,592.2 28.5,589.5 28.0,586.9 27.5,583.5 27.0,580.9 26.5,578.2 26.0,575.6 25.5,573.0 25.0,570.3 24.5,570.6 24.0,569.4 23.5,568.2 23.0,567.0 22.5,565.8 22.0,564.6 21.5,564.6 21.0,564.1 20.5,563.9 20.0,563.7 19.5,563.4 19.0,563.2 18.5,562.9 18.0,562.7 17.5,562.5 17.0,562.3 16.5,562.0 16.0,561.8 15.5,561.3 15.0,561.1 14.5,560.8 14.0,560.5 13.5,560.2 13.0,559.9 12.5,558.7 12.0,558.4 11.5,558.1 11.0,557.8 10.5,557.5 10.0,557.2 9.5,556.0 9.0,555.8 8.5,559.4 8.0,563.1 7.5,566.8 7.0,570.5" fill="#fff"/>
<polygon points="196.0,530.0 189.0,650.0 212.0,650.0" fill="#000"/>
<polygon points="234.0,568.0 224.0,642.0 243.0,642.0" fill="#000"/>
<polygon points="248.0,528.0 264.0,535.0 257.0,592.0" fill="#000"/>
<polygon points="470.0,535.0 487.0,535.0 479.0,585.0" fill="#000"/>
<polygon points="693.0,535.0 712.0,540.0 703.0,597.0" fill="#000"/>
<polygon points="28.0,540.0 41.0,548.0 35.0,597.0" fill="#000"/>
<polygon points="420.0,524.0 410.0,650.0 433.0,650.0" fill="#000"/>
<polygon points="459.0,566.0 446.0,650.0 474.0,650.0" fill="#000"/>
<polygon points="494.0,590.0 484.0,650.0 506.0,650.0" fill="#000"/>
<polygon points="646.0,535.0 630.0,652.0 664.0,655.0" fill="#000"/>
<polygon points="676.0,594.0 664.0,645.0 688.0,645.0" fill="#000"/>
<polygon points="35.0,590.0 33.0,555.0 38.0,555.0" fill="#000"/>
<polygon points="239.0,600.0 232.0,650.0 246.0,650.0" fill="#000"/>
<polygon points="685.6,548.0 683.0,575.0 688.0,575.0" fill="#000"/>
</g>
<line x1="397.5" y1="338.8" x2="397.5" y2="687.5" stroke="#ece4b8" stroke-width="1.5" stroke-dasharray="8.3 6.7"/>
<line x1="628.4" y1="338.8" x2="628.4" y2="687.5" stroke="#ece4b8" stroke-width="1.5" stroke-dasharray="8.3 6.7"/>
<path d="M555.5,342 V102 H796 Q802.5,102 802.5,108 V342 Z" fill="#000" stroke="#444" stroke-width="1"/>
<path d="M556,102 H796 Q802,102 802,108 V117 H556 Z" fill="url(#hdrG)"/>
<linearGradient id="hdrG" x1="0" y1="0" x2="0" y2="1"><stop offset="0" stop-color="#1b6892"/><stop offset="1" stop-color="#0f5078"/></linearGradient>
<text x="587.5" y="138" font-size="20" fill="#fff" font-weight="bold" text-anchor="start" >PS</text>
<text x="795" y="138" font-size="20" fill="#fff" font-weight="bold" text-anchor="end" >-77.37 cm/s</text>
<rect x="584" y="146" width="218" height="1" fill="#3c3c3c"/>
<text x="587.5" y="166" font-size="20" fill="#fff" font-weight="bold" text-anchor="start" >ED</text>
<text x="795" y="166" font-size="20" fill="#fff" font-weight="bold" text-anchor="end" >-30.86 cm/s</text>
<rect x="584" y="174" width="218" height="1" fill="#3c3c3c"/>
<text x="587.5" y="194" font-size="20" fill="#fff" font-weight="bold" text-anchor="start" >TAMAX</text>
<text x="795" y="194" font-size="20" fill="#fff" font-weight="bold" text-anchor="end" >-37.42 cm/s</text>
<rect x="584" y="202" width="218" height="1" fill="#3c3c3c"/>
<text x="587.5" y="222" font-size="20" fill="#fff" font-weight="bold" text-anchor="start" >TAMEAN</text>
<text x="795" y="222" font-size="20" fill="#fff" font-weight="bold" text-anchor="end" >-26.75 cm/s</text>
<rect x="584" y="230" width="218" height="1" fill="#3c3c3c"/>
<text x="587.5" y="250" font-size="20" fill="#fff" font-weight="bold" text-anchor="start" >PI</text>
<text x="795" y="250" font-size="20" fill="#fff" font-weight="bold" text-anchor="end" >1.24</text>
<rect x="584" y="258" width="218" height="1" fill="#3c3c3c"/>
<text x="587.5" y="278" font-size="20" fill="#fff" font-weight="bold" text-anchor="start" >RI</text>
<text x="795" y="278" font-size="20" fill="#fff" font-weight="bold" text-anchor="end" >0.60</text>
<rect x="584" y="286" width="218" height="1" fill="#3c3c3c"/>
<text x="587.5" y="306" font-size="20" fill="#fff" font-weight="bold" text-anchor="start" >S/D</text>
<text x="795" y="306" font-size="20" fill="#fff" font-weight="bold" text-anchor="end" >2.51</text>
<rect x="584" y="314" width="218" height="1" fill="#3c3c3c"/>
<text x="587.5" y="334" font-size="20" fill="#fff" font-weight="bold" text-anchor="start" >HR</text>
<text x="795" y="334" font-size="20" fill="#fff" font-weight="bold" text-anchor="end" >65(1) Bpm</text>
<linearGradient id="cbL" x1="0" y1="0" x2="0" y2="1"><stop offset="0" stop-color="#22e09a"/><stop offset="0.12" stop-color="#10e8c8"/><stop offset="0.28" stop-color="#00e4f4"/><stop offset="0.45" stop-color="#1898e0"/><stop offset="0.6" stop-color="#2048b0"/><stop offset="0.7" stop-color="#201860"/><stop offset="0.76" stop-color="#501008"/><stop offset="0.82" stop-color="#e03c10"/><stop offset="0.9" stop-color="#ff9010"/><stop offset="1" stop-color="#f8f020"/></linearGradient>
<linearGradient id="cbR" x1="0" y1="0" x2="0" y2="1"><stop offset="0" stop-color="#f0f0b0"/><stop offset="0.2" stop-color="#f0d820"/><stop offset="0.5" stop-color="#e08010"/><stop offset="0.75" stop-color="#802008"/><stop offset="1" stop-color="#200404"/></linearGradient>
<rect x="810" y="125.5" width="11.5" height="126.5" fill="url(#cbL)"/>
<rect x="821.5" y="125.5" width="4.5" height="126.5" fill="url(#cbR)"/>
<text x="802.3" y="122.5" font-size="16" fill="#fff" font-weight="normal" text-anchor="start" >32.4</text>
<text x="803.5" y="265.5" font-size="16" fill="#fff" font-weight="normal" text-anchor="start" >-14.7</text>
<text x="849.5" y="121.5" font-size="19.5" fill="#8ed0ec" font-weight="bold" text-anchor="start" >DC-60</text>
<text x="849" y="147" font-size="16" fill="#38a0c4" font-weight="normal" text-anchor="start" >B</text><rect x="850" y="148.1" width="13.5" height="1.9" fill="#38a0c4"/>
<text x="847" y="173" font-size="16.3" fill="#80b8c8" font-weight="normal" text-anchor="start" >FH12</text>
<text x="932" y="173" font-size="16.3" fill="#80b8c8" font-weight="normal" text-anchor="start" >/D3.5</text>
<text x="847" y="197.5" font-size="16.3" fill="#80b8c8" font-weight="normal" text-anchor="start" >FR23</text>
<text x="932" y="197.5" font-size="16.3" fill="#80b8c8" font-weight="normal" text-anchor="start" >/DR100</text>
<text x="847" y="222.3" font-size="16.3" fill="#80b8c8" font-weight="normal" text-anchor="start" >G27</text>
<text x="932" y="222.3" font-size="16.3" fill="#80b8c8" font-weight="normal" text-anchor="start" >/iClear2</text>
<text x="847" y="247.3" font-size="16.3" fill="#80b8c8" font-weight="normal" text-anchor="start" >iBeam1</text>
<text x="932" y="247.3" font-size="16.3" fill="#80b8c8" font-weight="normal" text-anchor="start" >/Z1.60</text>
<text x="849" y="283" font-size="16" fill="#38a0c4" font-weight="normal" text-anchor="start" >C</text><rect x="850" y="284.1" width="12" height="1.9" fill="#38a0c4"/>
<text x="847" y="307.3" font-size="16.3" fill="#80b8c8" font-weight="normal" text-anchor="start" >F5.7</text>
<text x="932" y="307.3" font-size="16.3" fill="#80b8c8" font-weight="normal" text-anchor="start" >/G66</text>
<text x="847" y="332.2" font-size="16.3" fill="#80b8c8" font-weight="normal" text-anchor="start" >WF791</text>
<text x="932" y="332.2" font-size="16.3" fill="#80b8c8" font-weight="normal" text-anchor="start" >/PRF3.5k</text>
<text x="849" y="366.6" font-size="16" fill="#38a0c4" font-weight="normal" text-anchor="start" >PW</text><rect x="850" y="367.70000000000005" width="28" height="1.9" fill="#38a0c4"/>
<text x="847" y="392.4" font-size="16.3" fill="#80b8c8" font-weight="normal" text-anchor="start" >F5.7</text>
<text x="932" y="392.4" font-size="16.3" fill="#80b8c8" font-weight="normal" text-anchor="start" >/G42</text>
<text x="847" y="417.7" font-size="16.3" fill="#80b8c8" font-weight="normal" text-anchor="start" >PRF5.3k</text>
<text x="932" y="417.7" font-size="16.3" fill="#80b8c8" font-weight="normal" text-anchor="start" >/WF435</text>
<text x="847" y="442.6" font-size="16.3" fill="#80b8c8" font-weight="normal" text-anchor="start" >SVD16.3</text>
<text x="932" y="442.6" font-size="16.3" fill="#80b8c8" font-weight="normal" text-anchor="start" >/SV1.5</text>
<text x="850.5" y="467.8" font-size="16.5" fill="#80b8c8" font-weight="normal" text-anchor="start" >Angle</text>
<text x="919.5" y="467.8" font-size="16.3" fill="#80b8c8" font-weight="normal" text-anchor="start" >60°</text>
<polyline points="398.5,572.0 402.2,571.1 406.0,570.3 411.5,538.7 416.0,457.0 422.7,490.5 426.4,509.1 430.0,527.6 434.7,536.0 439.4,544.3 445.0,550.0 450.5,524.0 456.0,514.6 460.6,518.2 465.3,522.0 471.0,533.2 474.6,556.1 478.3,579.6 482.1,561.9 485.8,546.0 491.3,540.6 495.0,548.9 498.7,555.4 502.4,555.2 506.1,557.3 509.8,559.2 513.5,558.1 517.3,560.2 521.0,561.3 524.7,560.9 528.4,562.9 532.1,565.7 535.9,569.5 539.6,572.1 543.3,571.7 547.0,572.1 550.7,570.5 554.4,570.4 558.1,569.9 561.8,570.6 565.5,570.3 569.2,571.3 572.9,570.5 576.6,571.0 580.3,570.0 584.0,570.9 587.8,569.3 591.5,569.8 595.2,570.7 598.9,570.8 602.6,570.3 606.7,571.6 610.8,572.3 614.8,574.2 618.9,575.5 623.0,577.7 627.9,568.4" fill="none" stroke="#fff2b8" stroke-width="1.3"/>
<polyline points="398.5,598.0 402.2,595.6 406.0,593.1 409.7,590.7 414.4,538.0 419.0,486.8 424.5,512.8 428.2,537.9 432.0,561.0 436.6,571.0 441.2,583.0 445.9,576.9 450.5,568.4 454.2,558.4 458.0,546.0 462.5,550.1 467.0,557.0 470.8,574.0 474.5,591.8 478.3,609.2 482.1,587.3 485.8,568.4 489.4,566.3 493.0,564.7 497.7,573.5 502.4,579.6 506.1,577.2 509.9,577.5 513.6,576.0 517.3,576.6 521.0,579.9 524.7,582.7 528.4,583.3 532.1,583.8 535.8,584.7 539.6,586.4 543.3,589.3 547.0,590.7 550.7,588.8 554.4,588.6 558.1,589.5 561.8,590.5 565.5,588.8 569.2,588.2 572.9,587.8 576.6,588.2 580.3,586.1 584.0,587.0 587.7,589.5 591.4,590.4 595.2,593.9 598.9,597.3 602.6,598.0 606.3,597.5 610.0,600.1 613.8,601.2 617.5,601.8 622.1,595.1 626.8,590.7" fill="none" stroke="#98a8a0" stroke-width="1.3"/>
<rect x="0" y="642.2" width="750" height="1.8" fill="#e8e8e8"/>
<path d="M410,455 h12 M416,449 v12" stroke="#30d8e8" stroke-width="2"/>
<path d="M622,569 h12 M628,563 v12" stroke="#30d8e8" stroke-width="2"/>
<rect x="738" y="667.3" width="6" height="1.3" fill="#9a9a9a"/>
<rect x="738" y="642.9" width="12" height="1.5" fill="#d8d8d8"/>
<rect x="738" y="618.7" width="6" height="1.3" fill="#9a9a9a"/>
<rect x="738" y="594.4" width="6" height="1.3" fill="#9a9a9a"/>
<rect x="738" y="570.1" width="6" height="1.3" fill="#9a9a9a"/>
<rect x="738" y="545.8" width="6" height="1.3" fill="#9a9a9a"/>
<rect x="738" y="521.4" width="12" height="1.5" fill="#d8d8d8"/>
<rect x="738" y="497.2" width="6" height="1.3" fill="#9a9a9a"/>
<rect x="738" y="472.9" width="6" height="1.3" fill="#9a9a9a"/>
<rect x="738" y="448.6" width="6" height="1.3" fill="#9a9a9a"/>
<rect x="738" y="424.3" width="6" height="1.3" fill="#9a9a9a"/>
<rect x="738" y="399.9" width="12" height="1.5" fill="#d8d8d8"/>
<rect x="738" y="375.7" width="6" height="1.3" fill="#9a9a9a"/>
<rect x="738" y="351.4" width="6" height="1.3" fill="#9a9a9a"/>
<text x="752" y="404.3" font-size="15" fill="#5a8aa6" font-weight="normal" text-anchor="start" >-100</text>
<text x="752" y="526" font-size="15" fill="#5a8aa6" font-weight="normal" text-anchor="start" >-50</text>
<text x="751" y="647.5" font-size="16" fill="#5a8aa6" font-weight="normal" text-anchor="start" letter-spacing="0.3">0cm/s</text>
<path d="M742,687 L749.5,677 L757,687 Z" fill="#1e86aa"/>
<rect x="749" y="687" width="3" height="11" fill="#d0d8e0"/>
<rect x="0" y="687" width="3" height="10.5" fill="#c8ccd0"/>
<rect x="24" y="695.5" width="2" height="2" fill="#d0d0d0"/>
<rect x="49" y="695.5" width="2" height="2" fill="#d0d0d0"/>
<rect x="74" y="695.5" width="2" height="2" fill="#d0d0d0"/>
<rect x="99" y="695.5" width="2" height="2" fill="#d0d0d0"/>
<rect x="124" y="690.5" width="2" height="7" fill="#c8ccd0"/>
<rect x="149" y="695.5" width="2" height="2" fill="#d0d0d0"/>
<rect x="174" y="695.5" width="2" height="2" fill="#d0d0d0"/>
<rect x="199" y="695.5" width="2" height="2" fill="#d0d0d0"/>
<rect x="224" y="695.5" width="2" height="2" fill="#d0d0d0"/>
<rect x="248.5" y="687" width="3" height="10.5" fill="#c8ccd0"/>
<rect x="274" y="695.5" width="2" height="2" fill="#d0d0d0"/>
<rect x="299" y="695.5" width="2" height="2" fill="#d0d0d0"/>
<rect x="324" y="695.5" width="2" height="2" fill="#d0d0d0"/>
<rect x="349" y="695.5" width="2" height="2" fill="#d0d0d0"/>
<rect x="374" y="690.5" width="2" height="7" fill="#c8ccd0"/>
<rect x="399" y="695.5" width="2" height="2" fill="#d0d0d0"/>
<rect x="424" y="695.5" width="2" height="2" fill="#d0d0d0"/>
<rect x="449" y="695.5" width="2" height="2" fill="#d0d0d0"/>
<rect x="474" y="695.5" width="2" height="2" fill="#d0d0d0"/>
<rect x="498.5" y="687" width="3" height="10.5" fill="#c8ccd0"/>
<rect x="524" y="695.5" width="2" height="2" fill="#d0d0d0"/>
<rect x="549" y="695.5" width="2" height="2" fill="#d0d0d0"/>
<rect x="574" y="695.5" width="2" height="2" fill="#d0d0d0"/>
<rect x="599" y="695.5" width="2" height="2" fill="#d0d0d0"/>
<rect x="624" y="690.5" width="2" height="7" fill="#c8ccd0"/>
<rect x="649" y="695.5" width="2" height="2" fill="#d0d0d0"/>
<rect x="674" y="695.5" width="2" height="2" fill="#d0d0d0"/>
<rect x="699" y="695.5" width="2" height="2" fill="#d0d0d0"/>
<rect x="724" y="695.5" width="2" height="2" fill="#d0d0d0"/>
<rect x="748.5" y="687" width="3" height="10.5" fill="#c8ccd0"/>
<rect x="263.9" y="710" width="216.5" height="2" fill="#2a7a9a"/>
<rect x="262" y="704" width="2" height="7.5" fill="#1a4a52"/>
<path d="M260,718.6 L264.3,712 L268.9,718.6 Z" fill="#1d6a8a"/>
<path d="M480.9,704.6 h3 v12.2 h2.1 v1.3 h-9 l3.9,-4 z" fill="#2a88a8"/>
<text x="491.5" y="716.5" font-size="15.5" fill="#3d88a8" font-weight="normal" text-anchor="start" >3.0/3.0</text>
<clipPath id="thclip"><rect x="837" y="558.6" width="151" height="106"/></clipPath>
<g clip-path="url(#thclip)"><g transform="translate(835,600) scale(0.489,0.49) translate(-245,-184.5)">
<use href="#bm"/>
</g></g>
<g filter="url(#speck)"><rect x="837" y="546.8" width="151" height="12" fill="#000"/><rect x="837" y="547" width="151" height="11.5" fill="#5c5c5c"/><rect x="837" y="548" width="151" height="2" fill="#8a8a8a"/><rect x="837" y="553" width="151" height="2" fill="#7a7a7a"/></g>
<rect x="802" y="530.5" width="220.5" height="170.5" rx="3" fill="none" stroke="#3c3c3c" stroke-width="1.2"/>
<rect x="802.6" y="558.3" width="221" height="104" fill="none" stroke="#3a8a3a" stroke-width="1.3"/>
</svg></body></html>
